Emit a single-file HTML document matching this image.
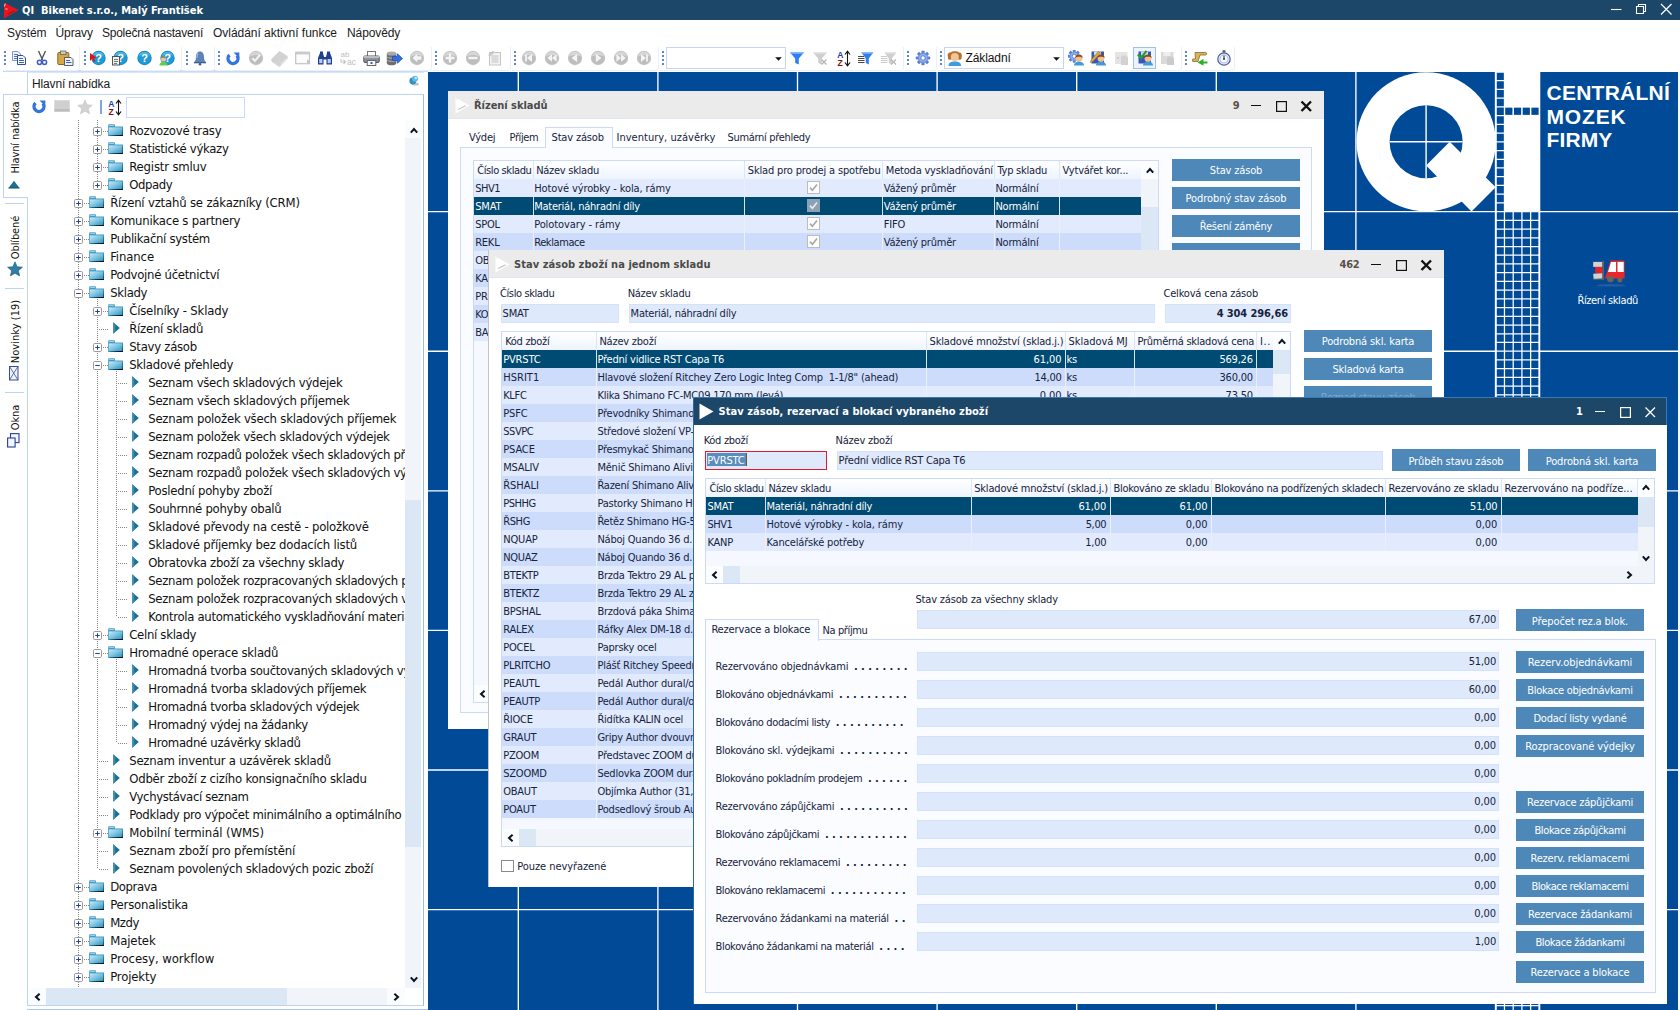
<!DOCTYPE html>
<html lang="cs"><head><meta charset="utf-8"><title>QI Bikenet s.r.o., Malý František</title>
<style>
html,body{margin:0;padding:0;background:#fff;}
body{width:1680px;height:1010px;overflow:hidden;font-family:"DejaVu Sans Condensed","Liberation Sans",sans-serif;font-stretch:condensed;font-size:11px;color:#16233b;}
div,span.t,svg{position:absolute;box-sizing:border-box;}
.root{position:relative;}
.t{white-space:pre;line-height:13px;font-size:11px;letter-spacing:-0.22px;}
.s{font-family:"Liberation Sans","DejaVu Sans",sans-serif;font-stretch:normal;letter-spacing:-0.1px;}
.tree{letter-spacing:-0.3px;color:#111;}
.menu{color:#1a1a1a;}
.w{color:#fff;}
.vt{color:#111;transform-origin:50% 50%;}
</style></head>
<body>
<div class="root" style="left:0px;top:0px;width:1680px;height:1010px;overflow:hidden;background:#fff;">
<div style="left:0px;top:0px;width:1680px;height:20px;background:#1c4768;"></div>
<svg style="left:3px;top:2px;" width="16" height="17" viewBox="0 0 16 17"><path d="M1 0.5L15.5 8L1 16.5Z" fill="#e8151d"/><path d="M1.6 4.6V2.6L3 2M2.2 7H4.6" stroke="#ffc4c4" stroke-width=".9" fill="none"/><path d="M4.6 12.2L11.4 8.4" stroke="#a80f18" stroke-width="1.2" fill="none"/></svg>
<span class="t" style="top:4px;left:22px;color:#fff;font-weight:bold;letter-spacing:-0.003px;">QI  Bikenet s.r.o., Malý František</span>
<svg style="left:1608px;top:0px;" width="70" height="20" viewBox="0 0 70 20"><path d="M3 9.5H13.5" stroke="#fff" stroke-width="1.1"/><path d="M28.5 6.5H35.5V13.5H28.5Z M30.5 6.5V4.5H37.5V11.5H35.5" stroke="#fff" stroke-width="1.1" fill="none"/><path d="M53 4L63.5 14.5M63.5 4L53 14.5" stroke="#fff" stroke-width="1.2"/></svg>
<div style="left:0px;top:20px;width:1680px;height:26px;background:#fff;"></div>
<span class="t s menu" style="top:26px;font-size:12px;line-height:14px;left:7px;">Systém</span>
<span class="t s menu" style="top:26px;font-size:12px;line-height:14px;left:55.5px;">Úpravy</span>
<span class="t s menu" style="top:26px;font-size:12px;line-height:14px;left:102px;letter-spacing:-0.246px;">Společná nastavení</span>
<span class="t s menu" style="top:26px;font-size:12px;line-height:14px;left:213px;letter-spacing:-0.032px;">Ovládání aktivní funkce</span>
<span class="t s menu" style="top:26px;font-size:12px;line-height:14px;left:347px;">Nápovědy</span>
<div style="left:0px;top:46px;width:1680px;height:26px;background:#fff;"></div>
<div style="left:3px;top:70px;width:425px;height:1.5px;background:#c9dcf5;"></div>
<div style="left:3px;top:46.5px;width:77px;height:24px;border:1px solid #e9f0fb;border-top:none;border-left:none;border-radius:0 0 4px 0;"></div>
<div style="left:81px;top:46.5px;width:101px;height:24px;border:1px solid #e9f0fb;border-top:none;border-left:none;border-radius:0 0 4px 0;"></div>
<div style="left:183px;top:46.5px;width:32px;height:24px;border:1px solid #e9f0fb;border-top:none;border-left:none;border-radius:0 0 4px 0;"></div>
<div style="left:216px;top:46.5px;width:216px;height:24px;border:1px solid #e9f0fb;border-top:none;border-left:none;border-radius:0 0 4px 0;"></div>
<div style="left:433px;top:46.5px;width:78px;height:24px;border:1px solid #e9f0fb;border-top:none;border-left:none;border-radius:0 0 4px 0;"></div>
<div style="left:512px;top:46.5px;width:147px;height:24px;border:1px solid #e9f0fb;border-top:none;border-left:none;border-radius:0 0 4px 0;"></div>
<div style="left:660px;top:46.5px;width:244px;height:24px;border:1px solid #e9f0fb;border-top:none;border-left:none;border-radius:0 0 4px 0;"></div>
<div style="left:905px;top:46.5px;width:32px;height:24px;border:1px solid #e9f0fb;border-top:none;border-left:none;border-radius:0 0 4px 0;"></div>
<div style="left:938px;top:46.5px;width:244px;height:24px;border:1px solid #e9f0fb;border-top:none;border-left:none;border-radius:0 0 4px 0;"></div>
<div style="left:1183px;top:46.5px;width:52px;height:24px;border:1px solid #e9f0fb;border-top:none;border-left:none;border-radius:0 0 4px 0;"></div>
<svg style="left:4px;top:51px;" width="2" height="14" viewBox="0 0 2 14"><rect x="0" y="0" width="2" height="2" fill="#5b86c8"/><rect x="0" y="4" width="2" height="2" fill="#5b86c8"/><rect x="0" y="8" width="2" height="2" fill="#5b86c8"/><rect x="0" y="12" width="2" height="2" fill="#5b86c8"/></svg>
<svg style="left:83.5px;top:51px;" width="2" height="14" viewBox="0 0 2 14"><rect x="0" y="0" width="2" height="2" fill="#5b86c8"/><rect x="0" y="4" width="2" height="2" fill="#5b86c8"/><rect x="0" y="8" width="2" height="2" fill="#5b86c8"/><rect x="0" y="12" width="2" height="2" fill="#5b86c8"/></svg>
<svg style="left:185.5px;top:51px;" width="2" height="14" viewBox="0 0 2 14"><rect x="0" y="0" width="2" height="2" fill="#5b86c8"/><rect x="0" y="4" width="2" height="2" fill="#5b86c8"/><rect x="0" y="8" width="2" height="2" fill="#5b86c8"/><rect x="0" y="12" width="2" height="2" fill="#5b86c8"/></svg>
<svg style="left:218px;top:51px;" width="2" height="14" viewBox="0 0 2 14"><rect x="0" y="0" width="2" height="2" fill="#5b86c8"/><rect x="0" y="4" width="2" height="2" fill="#5b86c8"/><rect x="0" y="8" width="2" height="2" fill="#5b86c8"/><rect x="0" y="12" width="2" height="2" fill="#5b86c8"/></svg>
<svg style="left:435px;top:51px;" width="2" height="14" viewBox="0 0 2 14"><rect x="0" y="0" width="2" height="2" fill="#5b86c8"/><rect x="0" y="4" width="2" height="2" fill="#5b86c8"/><rect x="0" y="8" width="2" height="2" fill="#5b86c8"/><rect x="0" y="12" width="2" height="2" fill="#5b86c8"/></svg>
<svg style="left:514px;top:51px;" width="2" height="14" viewBox="0 0 2 14"><rect x="0" y="0" width="2" height="2" fill="#5b86c8"/><rect x="0" y="4" width="2" height="2" fill="#5b86c8"/><rect x="0" y="8" width="2" height="2" fill="#5b86c8"/><rect x="0" y="12" width="2" height="2" fill="#5b86c8"/></svg>
<svg style="left:662px;top:51px;" width="2" height="14" viewBox="0 0 2 14"><rect x="0" y="0" width="2" height="2" fill="#5b86c8"/><rect x="0" y="4" width="2" height="2" fill="#5b86c8"/><rect x="0" y="8" width="2" height="2" fill="#5b86c8"/><rect x="0" y="12" width="2" height="2" fill="#5b86c8"/></svg>
<svg style="left:907px;top:51px;" width="2" height="14" viewBox="0 0 2 14"><rect x="0" y="0" width="2" height="2" fill="#5b86c8"/><rect x="0" y="4" width="2" height="2" fill="#5b86c8"/><rect x="0" y="8" width="2" height="2" fill="#5b86c8"/><rect x="0" y="12" width="2" height="2" fill="#5b86c8"/></svg>
<svg style="left:940px;top:51px;" width="2" height="14" viewBox="0 0 2 14"><rect x="0" y="0" width="2" height="2" fill="#5b86c8"/><rect x="0" y="4" width="2" height="2" fill="#5b86c8"/><rect x="0" y="8" width="2" height="2" fill="#5b86c8"/><rect x="0" y="12" width="2" height="2" fill="#5b86c8"/></svg>
<svg style="left:1185px;top:51px;" width="2" height="14" viewBox="0 0 2 14"><rect x="0" y="0" width="2" height="2" fill="#5b86c8"/><rect x="0" y="4" width="2" height="2" fill="#5b86c8"/><rect x="0" y="8" width="2" height="2" fill="#5b86c8"/><rect x="0" y="12" width="2" height="2" fill="#5b86c8"/></svg>
<svg style="left:10.5px;top:50px;" width="16" height="16" viewBox="0 0 16 16"><path d="M1.5 1.5H7L9.5 4V10.5H1.5Z" fill="#eef3fb" stroke="#7f96c6"/><path d="M3 4.5H7M3 6.5H8M3 8.5H8" stroke="#4a74d0" stroke-width="1"/><path d="M6.5 5.5H12L14.5 8V14.5H6.5Z" fill="#f4f7fd" stroke="#2f4f9a"/><path d="M8 8.5H12M8 10.5H13M8 12.5H13" stroke="#3a66cc" stroke-width="1"/></svg>
<svg style="left:33.5px;top:50px;" width="16" height="16" viewBox="0 0 16 16"><path d="M4.5 1L8.6 10M11.5 1L7.4 10" stroke="#555" stroke-width="1.4" fill="none"/><circle cx="5.5" cy="12.3" r="2.1" fill="none" stroke="#3b5fc4" stroke-width="1.5"/><circle cx="10.5" cy="12.3" r="2.1" fill="none" stroke="#3b5fc4" stroke-width="1.5"/></svg>
<svg style="left:56.5px;top:50px;" width="17" height="16" viewBox="0 0 17 16"><rect x="0.8" y="2.5" width="11" height="12" rx="1" fill="#d9a646" stroke="#8a6418"/><rect x="3.5" y="1" width="5.5" height="3.5" fill="#c9c9c9" stroke="#666" stroke-width=".8"/><path d="M7.5 7.5H14L16 9.5V15.5H7.5Z" fill="#eef2fb" stroke="#5a5a6a"/><path d="M9 10.5H13M9 12.5H14.5" stroke="#3a66cc"/></svg>
<svg style="left:89.5px;top:50px;" width="17" height="16" viewBox="0 0 17 16"><circle cx="8.5" cy="8" r="7.2" fill="#1486c4"/><circle cx="8.5" cy="8" r="6.4" fill="#1f9ad6"/><path d="M2.6 6A6.4 6.4 0 0 1 14.4 6A10 7 0 0 0 2.6 6Z" fill="#4cb6e6"/><text x="8.5" y="12" font-family="Liberation Sans,sans-serif" font-weight="bold" font-size="11" fill="#fff" text-anchor="middle">?</text><path d="M0 3L0 11L2.3 8.8L4 12L5.5 11.2L3.9 8.2L7 8Z" fill="#e01515"/></svg>
<svg style="left:112px;top:50px;" width="17" height="16" viewBox="0 0 17 16"><circle cx="8.5" cy="8" r="7.2" fill="#1486c4"/><circle cx="8.5" cy="8" r="6.4" fill="#1f9ad6"/><path d="M2.6 6A6.4 6.4 0 0 1 14.4 6A10 7 0 0 0 2.6 6Z" fill="#4cb6e6"/><text x="8.5" y="12" font-family="Liberation Sans,sans-serif" font-weight="bold" font-size="11" fill="#fff" text-anchor="middle">?</text><rect x="0.5" y="6.5" width="7" height="8.5" fill="#f2f2f2" stroke="#555"/><path d="M2 9.5H6M2 11.5H6M2 13.5H5" stroke="#666" stroke-width=".9"/></svg>
<svg style="left:135.5px;top:50px;" width="17" height="16" viewBox="0 0 17 16"><circle cx="8.5" cy="8" r="7.2" fill="#1486c4"/><circle cx="8.5" cy="8" r="6.4" fill="#1f9ad6"/><path d="M2.6 6A6.4 6.4 0 0 1 14.4 6A10 7 0 0 0 2.6 6Z" fill="#4cb6e6"/><text x="8.5" y="12" font-family="Liberation Sans,sans-serif" font-weight="bold" font-size="11" fill="#fff" text-anchor="middle">?</text></svg>
<svg style="left:158.5px;top:50px;" width="17" height="16" viewBox="0 0 17 16"><circle cx="8.5" cy="8" r="7.2" fill="#1486c4"/><circle cx="8.5" cy="8" r="6.4" fill="#1f9ad6"/><path d="M2.6 6A6.4 6.4 0 0 1 14.4 6A10 7 0 0 0 2.6 6Z" fill="#4cb6e6"/><text x="8.5" y="12" font-family="Liberation Sans,sans-serif" font-weight="bold" font-size="11" fill="#fff" text-anchor="middle">?</text><circle cx="4.5" cy="9" r="2.6" fill="#f1c08e"/><path d="M1.8 8.6A2.8 2.8 0 0 1 7.2 8.6C6 7.2 3 7.2 1.8 8.6Z" fill="#8a4b1c"/><path d="M0.5 15.5C0.5 12.5 2.5 12 4.5 12S8.5 12.5 8.5 15.5Z" fill="#5fd04a"/></svg>
<svg style="left:192px;top:50px;" width="16" height="16" viewBox="0 0 16 16"><path d="M8 1.5C5 1.5 4 4 4 7C4 10 3 11 2.3 12H13.7C13 11 12 10 12 7C12 4 11 1.5 8 1.5Z" fill="#5d84b6"/><path d="M6 3C5.2 4 5 5.5 5 8" stroke="#9fbbe0" stroke-width="1.2" fill="none"/><rect x="2" y="12" width="12" height="1.3" fill="#3d5f92"/><circle cx="8" cy="14.2" r="1.3" fill="#3d5f92"/></svg>
<svg style="left:226px;top:51.5px;" width="14" height="14" viewBox="0 0 14 14"><path d="M3.5 3.05A4.95 4.95 0 1 0 10.9 3.5" fill="none" stroke="#3473e0" stroke-width="3.4"/><path d="M7.6 0.4H13.4L13.2 6.2Z" fill="#3473e0"/></svg>
<svg style="left:248px;top:50px;" width="16" height="16" viewBox="0 0 16 16"><defs></defs><circle cx="8" cy="8" r="7.2" fill="#c6c6c6"/><circle cx="8" cy="8" r="6.2" fill="#bdbdbd"/><path d="M2 6.5A6.2 6.2 0 0 1 14 6.5A9 6 0 0 0 2 6.5Z" fill="#d6d6d6"/><path d="M4.3 8.2L7 10.8L11.8 5" stroke="#f4f4f4" stroke-width="2" fill="none"/></svg>
<svg style="left:270.5px;top:49.5px;" width="17" height="17" viewBox="0 0 17 17"><path d="M0.5 9L8.5 1L16.5 6L8.5 14.5Z" fill="#d2d2d2"/><path d="M0.5 9L8.5 14.5V17L0.5 11.2Z" fill="#bcbcbc"/><path d="M8.5 14.5L16.5 6V8.3L8.5 17Z" fill="#c6c6c6"/><path d="M1.5 10.8L8.5 15.8L15.8 7.8" stroke="#eee" stroke-width=".8" fill="none"/></svg>
<svg style="left:294.5px;top:50px;" width="16" height="16" viewBox="0 0 16 16"><rect x="0.7" y="2.2" width="13.8" height="11.5" fill="#fbfbfb" stroke="#c4c4c4" stroke-width="1.2"/><rect x="0.7" y="2.2" width="13.8" height="2.2" fill="#c9c9c9"/><path d="M12 9.5L15.5 11.5L12 14Z" fill="#c4c4c4"/></svg>
<svg style="left:316.5px;top:50px;" width="16" height="16" viewBox="0 0 16 16"><path d="M1 14.5V8L3 3H6L7 7H9L10 3H13L15 8V14.5H9.5V9.5H6.5V14.5Z" fill="#1f3f8f"/><rect x="2.2" y="9" width="3.2" height="4.2" fill="#b9cdf0"/><rect x="10.6" y="9" width="3.2" height="4.2" fill="#b9cdf0"/><rect x="3" y="1.5" width="3" height="2" fill="#1f3f8f"/><rect x="10" y="1.5" width="3" height="2" fill="#1f3f8f"/></svg>
<svg style="left:339.5px;top:50px;" width="17" height="16" viewBox="0 0 17 16"><text x="0.5" y="6.5" font-family="Liberation Sans,sans-serif" font-size="8" fill="#bdbdbd">ab</text><text x="7" y="15" font-family="Liberation Sans,sans-serif" font-size="8.5" fill="#bdbdbd">ac</text><path d="M1 9V12H5M3.5 10L5.5 12L3.5 14" stroke="#c4c4c4" stroke-width="1.1" fill="none"/></svg>
<svg style="left:362.5px;top:50px;" width="17" height="16" viewBox="0 0 17 16"><rect x="4.5" y="1.5" width="8" height="5" fill="#fff" stroke="#777"/><rect x="0.8" y="6" width="15.4" height="6.5" rx="1" fill="#8a8f98" stroke="#555"/><rect x="0.8" y="6" width="15.4" height="2.2" fill="#b7bcc6"/><rect x="4.2" y="10.5" width="8.6" height="5" fill="#f6f8fd" stroke="#666"/><rect x="7.5" y="12" width="2" height="2" fill="#2f67d8"/></svg>
<svg style="left:385.5px;top:50px;" width="17" height="16" viewBox="0 0 17 16"><path d="M0.8 3.5V13C0.8 14.5 3 15.3 5.6 15.3S10.4 14.5 10.4 13V3.5Z" fill="#6e6e6e"/><ellipse cx="5.6" cy="3.5" rx="4.8" ry="2" fill="#a9a9a9"/><path d="M0.8 6.8C2 8.6 9 8.6 10.4 6.8M0.8 10C2 11.8 9 11.8 10.4 10" stroke="#bbb" stroke-width=".9" fill="none"/><path d="M6.5 6.5H11.5V3.8L16.5 8.5L11.5 13.2V10.5H6.5Z" fill="#2f6fe0" stroke="#1a4bb0" stroke-width=".7"/></svg>
<svg style="left:409px;top:50px;" width="16" height="16" viewBox="0 0 16 16"><defs></defs><circle cx="8" cy="8" r="7.2" fill="#c6c6c6"/><circle cx="8" cy="8" r="6.2" fill="#bdbdbd"/><path d="M2 6.5A6.2 6.2 0 0 1 14 6.5A9 6 0 0 0 2 6.5Z" fill="#d6d6d6"/><path d="M3.5 8L8.2 3.8V6.3H12.3V9.7H8.2V12.2Z" fill="#f4f4f4"/></svg>
<svg style="left:442px;top:50px;" width="16" height="16" viewBox="0 0 16 16"><defs></defs><circle cx="8" cy="8" r="7.2" fill="#c6c6c6"/><circle cx="8" cy="8" r="6.2" fill="#bdbdbd"/><path d="M2 6.5A6.2 6.2 0 0 1 14 6.5A9 6 0 0 0 2 6.5Z" fill="#d6d6d6"/><path d="M8 3.5V12.5M3.5 8H12.5" stroke="#f4f4f4" stroke-width="2.4"/></svg>
<svg style="left:465px;top:50px;" width="16" height="16" viewBox="0 0 16 16"><defs></defs><circle cx="8" cy="8" r="7.2" fill="#c6c6c6"/><circle cx="8" cy="8" r="6.2" fill="#bdbdbd"/><path d="M2 6.5A6.2 6.2 0 0 1 14 6.5A9 6 0 0 0 2 6.5Z" fill="#d6d6d6"/><path d="M3.5 8H12.5" stroke="#f4f4f4" stroke-width="2.4"/></svg>
<svg style="left:487px;top:50px;" width="16" height="16" viewBox="0 0 16 16"><rect x="2.5" y="2.5" width="11" height="12.5" fill="#f3f3f3" stroke="#c4c4c4"/><path d="M4.5 6H11.5M4.5 8H11.5M4.5 10H11.5M4.5 12H11.5" stroke="#bdbdbd" stroke-width=".9"/><path d="M1 5L6 0.8L8.2 2.2L3 6.5Z" fill="#c9c9c9"/></svg>
<svg style="left:521px;top:50px;" width="16" height="16" viewBox="0 0 16 16"><defs></defs><circle cx="8" cy="8" r="7.2" fill="#c6c6c6"/><circle cx="8" cy="8" r="6.2" fill="#bdbdbd"/><path d="M2 6.5A6.2 6.2 0 0 1 14 6.5A9 6 0 0 0 2 6.5Z" fill="#d6d6d6"/><path d="M5 4.5V11.5" stroke="#f4f4f4" stroke-width="1.8"/><path d="M6 8L11 4V12Z" fill="#f4f4f4"/></svg>
<svg style="left:544px;top:50px;" width="16" height="16" viewBox="0 0 16 16"><defs></defs><circle cx="8" cy="8" r="7.2" fill="#c6c6c6"/><circle cx="8" cy="8" r="6.2" fill="#bdbdbd"/><path d="M2 6.5A6.2 6.2 0 0 1 14 6.5A9 6 0 0 0 2 6.5Z" fill="#d6d6d6"/><path d="M3.2 8L8 4.2V11.8ZM8 8L12.6 4.2V11.8Z" fill="#f4f4f4"/></svg>
<svg style="left:567px;top:50px;" width="16" height="16" viewBox="0 0 16 16"><defs></defs><circle cx="8" cy="8" r="7.2" fill="#c6c6c6"/><circle cx="8" cy="8" r="6.2" fill="#bdbdbd"/><path d="M2 6.5A6.2 6.2 0 0 1 14 6.5A9 6 0 0 0 2 6.5Z" fill="#d6d6d6"/><path d="M4.5 8L10.2 3.8V12.2Z" fill="#f4f4f4"/></svg>
<svg style="left:590px;top:50px;" width="16" height="16" viewBox="0 0 16 16"><defs></defs><circle cx="8" cy="8" r="7.2" fill="#c6c6c6"/><circle cx="8" cy="8" r="6.2" fill="#bdbdbd"/><path d="M2 6.5A6.2 6.2 0 0 1 14 6.5A9 6 0 0 0 2 6.5Z" fill="#d6d6d6"/><path d="M11.5 8L5.8 3.8V12.2Z" fill="#f4f4f4"/></svg>
<svg style="left:613px;top:50px;" width="16" height="16" viewBox="0 0 16 16"><defs></defs><circle cx="8" cy="8" r="7.2" fill="#c6c6c6"/><circle cx="8" cy="8" r="6.2" fill="#bdbdbd"/><path d="M2 6.5A6.2 6.2 0 0 1 14 6.5A9 6 0 0 0 2 6.5Z" fill="#d6d6d6"/><path d="M12.8 8L8 4.2V11.8ZM8 8L3.4 4.2V11.8Z" fill="#f4f4f4"/></svg>
<svg style="left:636px;top:50px;" width="16" height="16" viewBox="0 0 16 16"><defs></defs><circle cx="8" cy="8" r="7.2" fill="#c6c6c6"/><circle cx="8" cy="8" r="6.2" fill="#bdbdbd"/><path d="M2 6.5A6.2 6.2 0 0 1 14 6.5A9 6 0 0 0 2 6.5Z" fill="#d6d6d6"/><path d="M11 4.5V11.5" stroke="#f4f4f4" stroke-width="1.8"/><path d="M10 8L5 4V12Z" fill="#f4f4f4"/></svg>
<div style="left:666px;top:47px;width:120px;height:21.5px;background:#fff;border:1px solid #c3d7f1;"></div>
<svg style="left:775px;top:56.5px;" width="7" height="4" viewBox="0 0 7 4"><path d="M0.2 0.3H6.8L3.5 3.8Z" fill="#111"/></svg>
<svg style="left:789px;top:50px;" width="16" height="16" viewBox="0 0 16 16"><path d="M1 2.5H15L9.8 8.5V14.5L6.2 13V8.5Z" fill="#2f7ff0"/><path d="M1 2.5H15L14 3.8H2Z" fill="#7db4ff"/></svg>
<svg style="left:812px;top:50px;" width="16" height="16" viewBox="0 0 16 16"><path d="M1 2.5H15L9.8 8.5V14.5L6.2 13V8.5Z" fill="#cfcfcf"/><path d="M1 2.5H15L14 3.8H2Z" fill="#e2e2e2"/><path d="M9.5 9.5L14.5 14.5M14.5 9.5L9.5 14.5" stroke="#b4b4b4" stroke-width="1.3"/></svg>
<svg style="left:837px;top:50px;" width="14" height="17" viewBox="0 0 14 17"><text x="0.3" y="7.6" font-family="Liberation Sans,sans-serif" font-weight="bold" font-size="8.5" fill="#1f3f9f">A</text><text x="0.6" y="16" font-family="Liberation Sans,sans-serif" font-weight="bold" font-size="8.5" fill="#7a1414">Z</text><path d="M10.5 2V15" stroke="#111" stroke-width="1.1"/><path d="M8 4.5L10.5 1.2L13 4.5M8 12.5L10.5 15.8L13 12.5" fill="none" stroke="#111" stroke-width="1.2"/></svg>
<svg style="left:858px;top:50px;" width="16" height="16" viewBox="0 0 16 16"><g transform="translate(2.5 0) scale(.85 1)"><path d="M1 2.5H15L9.8 8.5V14.5L6.2 13V8.5Z" fill="#2f7ff0"/><path d="M1 2.5H15L14 3.8H2Z" fill="#7db4ff"/></g><path d="M0 6.5H6M0 8.5H6.5M0 10.5H6.5M0 12.5H6.5" stroke="#333" stroke-width=".9"/></svg>
<svg style="left:881px;top:50px;" width="16" height="16" viewBox="0 0 16 16"><g transform="translate(2.5 0) scale(.85 1)"><path d="M1 2.5H15L9.8 8.5V14.5L6.2 13V8.5Z" fill="#cfcfcf"/><path d="M1 2.5H15L14 3.8H2Z" fill="#e2e2e2"/></g><path d="M0 6.5H6M0 8.5H6.5M0 10.5H6.5M0 12.5H6.5" stroke="#c4c4c4" stroke-width=".9"/><path d="M10 9.5L15 14.5M15 9.5L10 14.5" stroke="#b4b4b4" stroke-width="1.3"/></svg>
<svg style="left:914.5px;top:50px;" width="16" height="16" viewBox="0 0 16 16"><g transform="translate(8 8)"><g fill="#5b7fd0"><rect x="-1.6" y="-7.2" width="3.2" height="14.4" rx=".8" transform="rotate(0)"/><rect x="-1.6" y="-7.2" width="3.2" height="14.4" rx=".8" transform="rotate(45)"/><rect x="-1.6" y="-7.2" width="3.2" height="14.4" rx=".8" transform="rotate(90)"/><rect x="-1.6" y="-7.2" width="3.2" height="14.4" rx=".8" transform="rotate(135)"/></g><circle r="5" fill="#6f92de"/><circle r="4" fill="#8fb0ee"/><circle r="2.2" fill="#fff" stroke="#4a6dc0" stroke-width=".8"/></g></svg>
<div style="left:944px;top:47px;width:120px;height:21.5px;background:#fff;border:1px solid #c3d7f1;"></div>
<svg style="left:947px;top:50.5px;" width="16" height="15" viewBox="0 0 16 15"><path d="M1 6C0 4 1 1 3.5 1.5C5 -0.2 10.5 -0.2 12 1.5C14.5 1 15.5 4 14.5 6.5C15 8 13.5 9.5 12 8.5H3.5C2 9.5 0.5 8 1 6Z" fill="#b5702f"/><circle cx="7.8" cy="6" r="4" fill="#f4c493"/><path d="M1.5 15C1.5 11.5 4 10.5 7.8 10.5S14 11.5 14 15Z" fill="#3f9bdc"/></svg>
<span class="t s menu" style="top:51px;font-size:12px;line-height:14px;left:965.5px;color:#111;">Základní</span>
<svg style="left:1052.5px;top:56.5px;" width="7" height="4" viewBox="0 0 7 4"><path d="M0.2 0.3H6.8L3.5 3.8Z" fill="#111"/></svg>
<svg style="left:1068px;top:50px;" width="16" height="16" viewBox="0 0 16 16"><g transform="translate(-1 -1) scale(.9)"><g transform="translate(8 8)"><g fill="#5b7fd0"><rect x="-1.6" y="-7.2" width="3.2" height="14.4" rx=".8" transform="rotate(0)"/><rect x="-1.6" y="-7.2" width="3.2" height="14.4" rx=".8" transform="rotate(45)"/><rect x="-1.6" y="-7.2" width="3.2" height="14.4" rx=".8" transform="rotate(90)"/><rect x="-1.6" y="-7.2" width="3.2" height="14.4" rx=".8" transform="rotate(135)"/></g><circle r="5" fill="#6f92de"/><circle r="4" fill="#8fb0ee"/><circle r="2.2" fill="#fff" stroke="#4a6dc0" stroke-width=".8"/></g></g><g transform="translate(6 4.5) scale(1)"><circle cx="5" cy="4" r="3.4" fill="#f1c08e"/><path d="M1.4 3.6A3.6 3.6 0 0 1 8.6 3.6C7 1.8 3 1.8 1.4 3.6Z" fill="#8a4b1c"/><path d="M0 11C0 8 2.5 7.2 5 7.2S10 8 10 11Z" fill="#3f9bdc"/></g></svg>
<svg style="left:1090px;top:50px;" width="16" height="16" viewBox="0 0 16 16"><rect x="1.5" y="1.5" width="12.5" height="12" fill="#3a56b8"/><rect x="4" y="1.5" width="7" height="4" fill="#cfd8f4"/><g transform="translate(6 4.5) scale(1)"><circle cx="5" cy="4" r="3.4" fill="#f1c08e"/><path d="M1.4 3.6A3.6 3.6 0 0 1 8.6 3.6C7 1.8 3 1.8 1.4 3.6Z" fill="#8a4b1c"/><path d="M0 11C0 8 2.5 7.2 5 7.2S10 8 10 11Z" fill="#3f9bdc"/></g><path d="M1 10L8.5 1.5L10.5 3L3 11.5L0.5 12.5Z" fill="#e2a93a" stroke="#8a6418" stroke-width=".5"/></svg>
<svg style="left:1113.5px;top:50px;" width="16" height="16" viewBox="0 0 16 16"><rect x="1" y="2" width="12.5" height="12" fill="#e4e4e4"/><path d="M7 8C7 6 9 5 10.5 5.5C12.5 5 14.5 7 14 9.5V15H7Z" fill="#d2d2d2"/><rect x="3" y="7" width="2" height="1.5" fill="#c4c4c4"/></svg>
<div style="left:1133px;top:47px;width:23px;height:21.5px;background:#eef4fd;border:1px solid #9fc0ea;"></div>
<svg style="left:1136.5px;top:50px;" width="16" height="16" viewBox="0 0 16 16"><rect x="1.5" y="1.5" width="12.5" height="12" fill="#3a56b8"/><rect x="4" y="1.5" width="7" height="4" fill="#cfd8f4"/><g transform="translate(6 4.5) scale(1)"><circle cx="5" cy="4" r="3.4" fill="#f1c08e"/><path d="M1.4 3.6A3.6 3.6 0 0 1 8.6 3.6C7 1.8 3 1.8 1.4 3.6Z" fill="#8a4b1c"/><path d="M0 11C0 8 2.5 7.2 5 7.2S10 8 10 11Z" fill="#3f9bdc"/></g><path d="M0.8 4.5L4 8L9.5 0.8" stroke="#27a127" stroke-width="2.2" fill="none"/></svg>
<svg style="left:1159.5px;top:50px;" width="16" height="16" viewBox="0 0 16 16"><rect x="1" y="2" width="12.5" height="12" fill="#dadada"/><rect x="3.5" y="2" width="7" height="4" fill="#eee"/><path d="M7 9C7 7 9 6 10.5 6.5C12.5 6 14.5 8 14 10.5V15H7Z" fill="#cbcbcb"/></svg>
<svg style="left:1192px;top:50px;" width="17" height="16" viewBox="0 0 17 16"><path d="M3 2.5H13.5C15 2.5 15 5 13.5 5H8L6 11.5H1C-0.3 11.5 -0.3 9 1 9H3.5Z" fill="#d7b35a" stroke="#8a6a1e" stroke-width=".8"/><path d="M5.5 12H9.5V9.2L15.5 13L9.5 16.3V14H5.5Z" fill="#2fae2f" transform="scale(-1 1) translate(-21 -0.5)"/></svg>
<svg style="left:1215.5px;top:50px;" width="16" height="16" viewBox="0 0 16 16"><rect x="6.6" y="0.3" width="2.8" height="2.2" fill="#555"/><circle cx="8" cy="9" r="6.2" fill="#dfe6f6" stroke="#4a5f9a" stroke-width="1.2"/><circle cx="8" cy="9" r="4" fill="#f8faff" stroke="#8fa3d6" stroke-width=".6"/><path d="M8 9V5.5" stroke="#223" stroke-width="1"/><circle cx="8" cy="9" r="1" fill="#334"/></svg>
<div style="left:0px;top:71.5px;width:428px;height:938.5px;overflow:hidden;background:#fff;">
<div style="left:27px;top:0px;width:397px;height:23px;border-left:1px solid #bcd3f2;border-top:1px solid #dbe7f8;"></div>
<span class="t s menu" style="top:5.5px;font-size:12px;line-height:14px;left:32px;letter-spacing:-0.147px;">Hlavní nabídka</span>
<svg style="left:408px;top:3.5px;" width="12" height="12" viewBox="0 0 12 12"><ellipse cx="7.5" cy="9" rx="3.5" ry="1.6" fill="#999" opacity=".6"/><circle cx="4.8" cy="6" r="3.4" fill="#2f8fc0"/><circle cx="7" cy="3.8" r="3" fill="#5fb8e4"/><circle cx="7.8" cy="3" r="1.2" fill="#c8ecff"/></svg>
<div style="left:3px;top:22.5px;width:420.5px;height:912px;border:1px solid #bcd3f2;border-right-color:#9bbce6;"></div>
<div style="left:2px;top:126px;width:25px;height:810px;background:#fff;"></div>
<div style="left:3px;top:125.5px;width:24.5px;height:1px;background:#bcd3f2;"></div>
<div style="left:27px;top:125.5px;width:1px;height:808.5px;background:#bcd3f2;"></div>
<div style="left:3px;top:933.5px;width:24px;height:1px;background:#fff;"></div>
<div style="left:5px;top:131.5px;width:18.5px;height:1px;background:#bcd3f2;"></div>
<div style="left:5px;top:216.5px;width:18.5px;height:1px;background:#bcd3f2;"></div>
<div style="left:5px;top:320.5px;width:18.5px;height:1px;background:#bcd3f2;"></div>
<span class="t vt" style="left:-85px;top:59.5px;width:200px;text-align:center;transform:rotate(-90deg);letter-spacing:-0.11px;">Hlavní nabídka</span>
<span class="t vt" style="left:-85px;top:159px;width:200px;text-align:center;transform:rotate(-90deg);letter-spacing:-0.127px;">Oblíbené</span>
<span class="t vt" style="left:-85px;top:253.5px;width:200px;text-align:center;transform:rotate(-90deg);letter-spacing:0.035px;">Novinky (19)</span>
<span class="t vt" style="left:-85px;top:339px;width:200px;text-align:center;transform:rotate(-90deg);letter-spacing:-0.04px;">Okna</span>
<svg style="left:8px;top:108.5px;" width="12" height="9" viewBox="0 0 12 9"><path d="M0.5 8L6 0.8L11.5 8Z" fill="#1f6f92"/><path d="M0.5 8H11.5" stroke="#164d66" stroke-width="1"/></svg>
<svg style="left:7px;top:189.5px;" width="16" height="16" viewBox="0 0 16 16"><path d="M8 0.8L10.1 5.7L15.4 6.2L11.4 9.7L12.6 14.9L8 12.2L3.4 14.9L4.6 9.7L0.6 6.2L5.9 5.7Z" fill="#2d7fa6" stroke="#1a5572" stroke-width=".6"/></svg>
<svg style="left:9px;top:294.5px;" width="10" height="15" viewBox="0 0 10 15"><rect x="0.5" y="0.5" width="8.5" height="13.5" fill="#eef2fb" stroke="#3a4f9a"/><path d="M0.5 0.5L4.7 7.2L0.5 14M9 0.5L4.7 7.2L9 14" fill="none" stroke="#3a4f9a" stroke-width=".8"/></svg>
<svg style="left:7px;top:361.5px;" width="13" height="15" viewBox="0 0 13 15"><rect x="3.5" y="0.6" width="8.5" height="9" fill="#f4f6fd" stroke="#2a3f9a" stroke-width="1.1"/><rect x="0.6" y="5" width="7.5" height="9" fill="#f4f6fd" stroke="#2a3f9a" stroke-width="1.1"/></svg>
<svg style="left:32px;top:28.5px;" width="14" height="14" viewBox="0 0 14 14"><path d="M3.5 3.05A4.95 4.95 0 1 0 10.9 3.5" fill="none" stroke="#3473e0" stroke-width="3.4"/><path d="M7.6 0.4H13.4L13.2 6.2Z" fill="#3473e0"/></svg>
<svg style="left:54px;top:28.5px;" width="16" height="13" viewBox="0 0 16 13"><rect x="0.5" y="0.5" width="15" height="11" fill="#cfcfcf" stroke="#dcdcdc"/><rect x="0.5" y="9" width="15" height="2.5" fill="#bdbdbd"/></svg>
<svg style="left:77px;top:27.5px;" width="16" height="16" viewBox="0 0 16 16"><path d="M8 0.8L10.1 5.7L15.4 6.2L11.4 9.7L12.6 14.9L8 12.2L3.4 14.9L4.6 9.7L0.6 6.2L5.9 5.7Z" fill="#d2d2d2" stroke="#c2c2c2" stroke-width=".5"/></svg>
<div style="left:100px;top:28.5px;width:1.5px;height:14px;background:#7fa6d6;"></div>
<svg style="left:108px;top:27.5px;" width="14" height="17" viewBox="0 0 14 17"><text x="0.3" y="7.6" font-family="Liberation Sans,sans-serif" font-weight="bold" font-size="8.5" fill="#1f3f9f">A</text><text x="0.6" y="16" font-family="Liberation Sans,sans-serif" font-weight="bold" font-size="8.5" fill="#7a1414">Z</text><path d="M10.5 2V15" stroke="#111" stroke-width="1.1"/><path d="M8 4.5L10.5 1.2L13 4.5M8 12.5L10.5 15.8L13 12.5" fill="none" stroke="#111" stroke-width="1.2"/></svg>
<div style="left:126px;top:25.5px;width:119px;height:21px;background:#fff;border:1px solid #c9dcf5;"></div>
<div style="left:28px;top:48.5px;width:377px;height:868px;overflow:hidden;background:#fff;">
<svg width="0" height="0" style="left:0;top:0"><defs><linearGradient id="fg" x1="0" y1="0" x2="1" y2="1"><stop offset="0" stop-color="#cfe9f5"/><stop offset=".5" stop-color="#7cc3e0"/><stop offset="1" stop-color="#2f93c2"/></linearGradient><linearGradient id="fb" x1="0" y1="0" x2="1" y2="0"><stop offset="0" stop-color="#2f8db8"/><stop offset=".45" stop-color="#0c3f57"/><stop offset="1" stop-color="#000"/></linearGradient><linearGradient id="fr" x1="0" y1="0" x2="0" y2="1"><stop offset="0" stop-color="#3d9ac3"/><stop offset="1" stop-color="#04202d"/></linearGradient></defs></svg>
<div style="left:50px;top:0px;width:1px;height:870px;background-image:linear-gradient(#888 50%,transparent 50%);background-size:1px 2px;"></div>
<div style="left:69px;top:0px;width:1px;height:65.4px;background-image:linear-gradient(#888 50%,transparent 50%);background-size:1px 2px;"></div>
<div style="left:69px;top:179.4px;width:1px;height:570px;background-image:linear-gradient(#888 50%,transparent 50%);background-size:1px 2px;"></div>
<div style="left:88px;top:251.4px;width:1px;height:246px;background-image:linear-gradient(#888 50%,transparent 50%);background-size:1px 2px;"></div>
<div style="left:88px;top:539.4px;width:1px;height:84px;background-image:linear-gradient(#888 50%,transparent 50%);background-size:1px 2px;"></div>
<div style="left:74.5px;top:10.9px;width:6px;height:1px;background-image:linear-gradient(90deg,#888 50%,transparent 50%);background-size:2px 1px;"></div>
<svg style="left:65px;top:7.1px;" width="9" height="9" viewBox="0 0 9 9"><rect x="0.5" y="0.5" width="8" height="8" rx="1.2" fill="#fff" stroke="#9a9a9a"/><path d="M2.2 4.5H6.8" stroke="#2a3f8f" stroke-width="1"/><path d="M4.5 2.2V6.8" stroke="#2a3f8f" stroke-width="1"/></svg>
<svg style="left:79.9px;top:3.9px;" width="15.2" height="12.3" viewBox="0 0 15.2 12.3"><path d="M0.2 3V0.9Q0.2 0.2 0.9 0.2H6.2Q6.9 0.2 6.9 0.9V3Z" fill="#49a2ca"/><rect x="1.2" y="1" width="4.6" height=".8" fill="#b5deef"/><rect x="0.2" y="2.5" width="14.9" height="9.6" rx=".5" fill="#3d9ac3"/><rect x="1" y="3.4" width="13.3" height="7.6" fill="url(#fg)"/><rect x="0.8" y="11" width="14.3" height="1.15" fill="url(#fb)"/><rect x="14.3" y="3" width=".8" height="9" fill="url(#fr)"/></svg>
<span class="t tree" style="top:3px;font-size:13px;line-height:15px;left:101.2px;letter-spacing:-0.227px;">Rozvozové trasy</span>
<div style="left:74.5px;top:28.9px;width:6px;height:1px;background-image:linear-gradient(90deg,#888 50%,transparent 50%);background-size:2px 1px;"></div>
<svg style="left:65px;top:25.1px;" width="9" height="9" viewBox="0 0 9 9"><rect x="0.5" y="0.5" width="8" height="8" rx="1.2" fill="#fff" stroke="#9a9a9a"/><path d="M2.2 4.5H6.8" stroke="#2a3f8f" stroke-width="1"/><path d="M4.5 2.2V6.8" stroke="#2a3f8f" stroke-width="1"/></svg>
<svg style="left:79.9px;top:21.9px;" width="15.2" height="12.3" viewBox="0 0 15.2 12.3"><path d="M0.2 3V0.9Q0.2 0.2 0.9 0.2H6.2Q6.9 0.2 6.9 0.9V3Z" fill="#49a2ca"/><rect x="1.2" y="1" width="4.6" height=".8" fill="#b5deef"/><rect x="0.2" y="2.5" width="14.9" height="9.6" rx=".5" fill="#3d9ac3"/><rect x="1" y="3.4" width="13.3" height="7.6" fill="url(#fg)"/><rect x="0.8" y="11" width="14.3" height="1.15" fill="url(#fb)"/><rect x="14.3" y="3" width=".8" height="9" fill="url(#fr)"/></svg>
<span class="t tree" style="top:21px;font-size:13px;line-height:15px;left:101.2px;letter-spacing:-0.328px;">Statistické výkazy</span>
<div style="left:74.5px;top:46.9px;width:6px;height:1px;background-image:linear-gradient(90deg,#888 50%,transparent 50%);background-size:2px 1px;"></div>
<svg style="left:65px;top:43.1px;" width="9" height="9" viewBox="0 0 9 9"><rect x="0.5" y="0.5" width="8" height="8" rx="1.2" fill="#fff" stroke="#9a9a9a"/><path d="M2.2 4.5H6.8" stroke="#2a3f8f" stroke-width="1"/><path d="M4.5 2.2V6.8" stroke="#2a3f8f" stroke-width="1"/></svg>
<svg style="left:79.9px;top:39.9px;" width="15.2" height="12.3" viewBox="0 0 15.2 12.3"><path d="M0.2 3V0.9Q0.2 0.2 0.9 0.2H6.2Q6.9 0.2 6.9 0.9V3Z" fill="#49a2ca"/><rect x="1.2" y="1" width="4.6" height=".8" fill="#b5deef"/><rect x="0.2" y="2.5" width="14.9" height="9.6" rx=".5" fill="#3d9ac3"/><rect x="1" y="3.4" width="13.3" height="7.6" fill="url(#fg)"/><rect x="0.8" y="11" width="14.3" height="1.15" fill="url(#fb)"/><rect x="14.3" y="3" width=".8" height="9" fill="url(#fr)"/></svg>
<span class="t tree" style="top:39px;font-size:13px;line-height:15px;left:101.2px;letter-spacing:-0.176px;">Registr smluv</span>
<div style="left:74.5px;top:64.9px;width:6px;height:1px;background-image:linear-gradient(90deg,#888 50%,transparent 50%);background-size:2px 1px;"></div>
<svg style="left:65px;top:61.1px;" width="9" height="9" viewBox="0 0 9 9"><rect x="0.5" y="0.5" width="8" height="8" rx="1.2" fill="#fff" stroke="#9a9a9a"/><path d="M2.2 4.5H6.8" stroke="#2a3f8f" stroke-width="1"/><path d="M4.5 2.2V6.8" stroke="#2a3f8f" stroke-width="1"/></svg>
<svg style="left:79.9px;top:57.9px;" width="15.2" height="12.3" viewBox="0 0 15.2 12.3"><path d="M0.2 3V0.9Q0.2 0.2 0.9 0.2H6.2Q6.9 0.2 6.9 0.9V3Z" fill="#49a2ca"/><rect x="1.2" y="1" width="4.6" height=".8" fill="#b5deef"/><rect x="0.2" y="2.5" width="14.9" height="9.6" rx=".5" fill="#3d9ac3"/><rect x="1" y="3.4" width="13.3" height="7.6" fill="url(#fg)"/><rect x="0.8" y="11" width="14.3" height="1.15" fill="url(#fb)"/><rect x="14.3" y="3" width=".8" height="9" fill="url(#fr)"/></svg>
<span class="t tree" style="top:57px;font-size:13px;line-height:15px;left:101.2px;letter-spacing:-0.43px;">Odpady</span>
<div style="left:55.5px;top:82.9px;width:6px;height:1px;background-image:linear-gradient(90deg,#888 50%,transparent 50%);background-size:2px 1px;"></div>
<svg style="left:46px;top:79.1px;" width="9" height="9" viewBox="0 0 9 9"><rect x="0.5" y="0.5" width="8" height="8" rx="1.2" fill="#fff" stroke="#9a9a9a"/><path d="M2.2 4.5H6.8" stroke="#2a3f8f" stroke-width="1"/><path d="M4.5 2.2V6.8" stroke="#2a3f8f" stroke-width="1"/></svg>
<svg style="left:60.9px;top:75.9px;" width="15.2" height="12.3" viewBox="0 0 15.2 12.3"><path d="M0.2 3V0.9Q0.2 0.2 0.9 0.2H6.2Q6.9 0.2 6.9 0.9V3Z" fill="#49a2ca"/><rect x="1.2" y="1" width="4.6" height=".8" fill="#b5deef"/><rect x="0.2" y="2.5" width="14.9" height="9.6" rx=".5" fill="#3d9ac3"/><rect x="1" y="3.4" width="13.3" height="7.6" fill="url(#fg)"/><rect x="0.8" y="11" width="14.3" height="1.15" fill="url(#fb)"/><rect x="14.3" y="3" width=".8" height="9" fill="url(#fr)"/></svg>
<span class="t tree" style="top:75px;font-size:13px;line-height:15px;left:82.2px;letter-spacing:-0.191px;">Řízení vztahů se zákazníky (CRM)</span>
<div style="left:55.5px;top:100.9px;width:6px;height:1px;background-image:linear-gradient(90deg,#888 50%,transparent 50%);background-size:2px 1px;"></div>
<svg style="left:46px;top:97.1px;" width="9" height="9" viewBox="0 0 9 9"><rect x="0.5" y="0.5" width="8" height="8" rx="1.2" fill="#fff" stroke="#9a9a9a"/><path d="M2.2 4.5H6.8" stroke="#2a3f8f" stroke-width="1"/><path d="M4.5 2.2V6.8" stroke="#2a3f8f" stroke-width="1"/></svg>
<svg style="left:60.9px;top:93.9px;" width="15.2" height="12.3" viewBox="0 0 15.2 12.3"><path d="M0.2 3V0.9Q0.2 0.2 0.9 0.2H6.2Q6.9 0.2 6.9 0.9V3Z" fill="#49a2ca"/><rect x="1.2" y="1" width="4.6" height=".8" fill="#b5deef"/><rect x="0.2" y="2.5" width="14.9" height="9.6" rx=".5" fill="#3d9ac3"/><rect x="1" y="3.4" width="13.3" height="7.6" fill="url(#fg)"/><rect x="0.8" y="11" width="14.3" height="1.15" fill="url(#fb)"/><rect x="14.3" y="3" width=".8" height="9" fill="url(#fr)"/></svg>
<span class="t tree" style="top:93px;font-size:13px;line-height:15px;left:82.2px;letter-spacing:-0.23px;">Komunikace s partnery</span>
<div style="left:55.5px;top:118.9px;width:6px;height:1px;background-image:linear-gradient(90deg,#888 50%,transparent 50%);background-size:2px 1px;"></div>
<svg style="left:46px;top:115.1px;" width="9" height="9" viewBox="0 0 9 9"><rect x="0.5" y="0.5" width="8" height="8" rx="1.2" fill="#fff" stroke="#9a9a9a"/><path d="M2.2 4.5H6.8" stroke="#2a3f8f" stroke-width="1"/><path d="M4.5 2.2V6.8" stroke="#2a3f8f" stroke-width="1"/></svg>
<svg style="left:60.9px;top:111.9px;" width="15.2" height="12.3" viewBox="0 0 15.2 12.3"><path d="M0.2 3V0.9Q0.2 0.2 0.9 0.2H6.2Q6.9 0.2 6.9 0.9V3Z" fill="#49a2ca"/><rect x="1.2" y="1" width="4.6" height=".8" fill="#b5deef"/><rect x="0.2" y="2.5" width="14.9" height="9.6" rx=".5" fill="#3d9ac3"/><rect x="1" y="3.4" width="13.3" height="7.6" fill="url(#fg)"/><rect x="0.8" y="11" width="14.3" height="1.15" fill="url(#fb)"/><rect x="14.3" y="3" width=".8" height="9" fill="url(#fr)"/></svg>
<span class="t tree" style="top:111px;font-size:13px;line-height:15px;left:82.2px;letter-spacing:-0.31px;">Publikační systém</span>
<div style="left:55.5px;top:136.9px;width:6px;height:1px;background-image:linear-gradient(90deg,#888 50%,transparent 50%);background-size:2px 1px;"></div>
<svg style="left:46px;top:133.1px;" width="9" height="9" viewBox="0 0 9 9"><rect x="0.5" y="0.5" width="8" height="8" rx="1.2" fill="#fff" stroke="#9a9a9a"/><path d="M2.2 4.5H6.8" stroke="#2a3f8f" stroke-width="1"/><path d="M4.5 2.2V6.8" stroke="#2a3f8f" stroke-width="1"/></svg>
<svg style="left:60.9px;top:129.9px;" width="15.2" height="12.3" viewBox="0 0 15.2 12.3"><path d="M0.2 3V0.9Q0.2 0.2 0.9 0.2H6.2Q6.9 0.2 6.9 0.9V3Z" fill="#49a2ca"/><rect x="1.2" y="1" width="4.6" height=".8" fill="#b5deef"/><rect x="0.2" y="2.5" width="14.9" height="9.6" rx=".5" fill="#3d9ac3"/><rect x="1" y="3.4" width="13.3" height="7.6" fill="url(#fg)"/><rect x="0.8" y="11" width="14.3" height="1.15" fill="url(#fb)"/><rect x="14.3" y="3" width=".8" height="9" fill="url(#fr)"/></svg>
<span class="t tree" style="top:129px;font-size:13px;line-height:15px;left:82.2px;letter-spacing:-0.122px;">Finance</span>
<div style="left:55.5px;top:154.9px;width:6px;height:1px;background-image:linear-gradient(90deg,#888 50%,transparent 50%);background-size:2px 1px;"></div>
<svg style="left:46px;top:151.1px;" width="9" height="9" viewBox="0 0 9 9"><rect x="0.5" y="0.5" width="8" height="8" rx="1.2" fill="#fff" stroke="#9a9a9a"/><path d="M2.2 4.5H6.8" stroke="#2a3f8f" stroke-width="1"/><path d="M4.5 2.2V6.8" stroke="#2a3f8f" stroke-width="1"/></svg>
<svg style="left:60.9px;top:147.9px;" width="15.2" height="12.3" viewBox="0 0 15.2 12.3"><path d="M0.2 3V0.9Q0.2 0.2 0.9 0.2H6.2Q6.9 0.2 6.9 0.9V3Z" fill="#49a2ca"/><rect x="1.2" y="1" width="4.6" height=".8" fill="#b5deef"/><rect x="0.2" y="2.5" width="14.9" height="9.6" rx=".5" fill="#3d9ac3"/><rect x="1" y="3.4" width="13.3" height="7.6" fill="url(#fg)"/><rect x="0.8" y="11" width="14.3" height="1.15" fill="url(#fb)"/><rect x="14.3" y="3" width=".8" height="9" fill="url(#fr)"/></svg>
<span class="t tree" style="top:147px;font-size:13px;line-height:15px;left:82.2px;letter-spacing:-0.274px;">Podvojné účetnictví</span>
<div style="left:55.5px;top:172.9px;width:6px;height:1px;background-image:linear-gradient(90deg,#888 50%,transparent 50%);background-size:2px 1px;"></div>
<svg style="left:46px;top:169.1px;" width="9" height="9" viewBox="0 0 9 9"><rect x="0.5" y="0.5" width="8" height="8" rx="1.2" fill="#fff" stroke="#9a9a9a"/><path d="M2.2 4.5H6.8" stroke="#2a3f8f" stroke-width="1"/></svg>
<svg style="left:60.9px;top:165.9px;" width="15.2" height="12.3" viewBox="0 0 15.2 12.3"><path d="M0.2 3V0.9Q0.2 0.2 0.9 0.2H6.2Q6.9 0.2 6.9 0.9V3Z" fill="#49a2ca"/><rect x="1.2" y="1" width="4.6" height=".8" fill="#b5deef"/><rect x="0.2" y="2.5" width="14.9" height="9.6" rx=".5" fill="#3d9ac3"/><rect x="1" y="3.4" width="13.3" height="7.6" fill="url(#fg)"/><rect x="0.8" y="11" width="14.3" height="1.15" fill="url(#fb)"/><rect x="14.3" y="3" width=".8" height="9" fill="url(#fr)"/></svg>
<span class="t tree" style="top:165px;font-size:13px;line-height:15px;left:82.2px;letter-spacing:-0.328px;">Sklady</span>
<div style="left:74.5px;top:190.9px;width:6px;height:1px;background-image:linear-gradient(90deg,#888 50%,transparent 50%);background-size:2px 1px;"></div>
<svg style="left:65px;top:187.1px;" width="9" height="9" viewBox="0 0 9 9"><rect x="0.5" y="0.5" width="8" height="8" rx="1.2" fill="#fff" stroke="#9a9a9a"/><path d="M2.2 4.5H6.8" stroke="#2a3f8f" stroke-width="1"/><path d="M4.5 2.2V6.8" stroke="#2a3f8f" stroke-width="1"/></svg>
<svg style="left:79.9px;top:183.9px;" width="15.2" height="12.3" viewBox="0 0 15.2 12.3"><path d="M0.2 3V0.9Q0.2 0.2 0.9 0.2H6.2Q6.9 0.2 6.9 0.9V3Z" fill="#49a2ca"/><rect x="1.2" y="1" width="4.6" height=".8" fill="#b5deef"/><rect x="0.2" y="2.5" width="14.9" height="9.6" rx=".5" fill="#3d9ac3"/><rect x="1" y="3.4" width="13.3" height="7.6" fill="url(#fg)"/><rect x="0.8" y="11" width="14.3" height="1.15" fill="url(#fb)"/><rect x="14.3" y="3" width=".8" height="9" fill="url(#fr)"/></svg>
<span class="t tree" style="top:183px;font-size:13px;line-height:15px;left:101.2px;letter-spacing:-0.193px;">Číselníky - Sklady</span>
<div style="left:70.5px;top:208.9px;width:10px;height:1px;background-image:linear-gradient(90deg,#888 50%,transparent 50%);background-size:2px 1px;"></div>
<svg style="left:84.5px;top:202px;" width="7" height="12" viewBox="0 0 7 12"><path d="M0.3 0.3L6.8 6L0.3 11.7Z" fill="#1f6f92"/><path d="M0.3 0.3L2.2 2V10L0.3 11.7Z" fill="#3d8eb0"/></svg>
<span class="t tree" style="top:201px;font-size:13px;line-height:15px;left:101.2px;letter-spacing:-0.248px;">Řízení skladů</span>
<div style="left:74.5px;top:226.9px;width:6px;height:1px;background-image:linear-gradient(90deg,#888 50%,transparent 50%);background-size:2px 1px;"></div>
<svg style="left:65px;top:223.1px;" width="9" height="9" viewBox="0 0 9 9"><rect x="0.5" y="0.5" width="8" height="8" rx="1.2" fill="#fff" stroke="#9a9a9a"/><path d="M2.2 4.5H6.8" stroke="#2a3f8f" stroke-width="1"/><path d="M4.5 2.2V6.8" stroke="#2a3f8f" stroke-width="1"/></svg>
<svg style="left:79.9px;top:219.9px;" width="15.2" height="12.3" viewBox="0 0 15.2 12.3"><path d="M0.2 3V0.9Q0.2 0.2 0.9 0.2H6.2Q6.9 0.2 6.9 0.9V3Z" fill="#49a2ca"/><rect x="1.2" y="1" width="4.6" height=".8" fill="#b5deef"/><rect x="0.2" y="2.5" width="14.9" height="9.6" rx=".5" fill="#3d9ac3"/><rect x="1" y="3.4" width="13.3" height="7.6" fill="url(#fg)"/><rect x="0.8" y="11" width="14.3" height="1.15" fill="url(#fb)"/><rect x="14.3" y="3" width=".8" height="9" fill="url(#fr)"/></svg>
<span class="t tree" style="top:219px;font-size:13px;line-height:15px;left:101.2px;letter-spacing:-0.274px;">Stavy zásob</span>
<div style="left:74.5px;top:244.9px;width:6px;height:1px;background-image:linear-gradient(90deg,#888 50%,transparent 50%);background-size:2px 1px;"></div>
<svg style="left:65px;top:241.1px;" width="9" height="9" viewBox="0 0 9 9"><rect x="0.5" y="0.5" width="8" height="8" rx="1.2" fill="#fff" stroke="#9a9a9a"/><path d="M2.2 4.5H6.8" stroke="#2a3f8f" stroke-width="1"/></svg>
<svg style="left:79.9px;top:237.9px;" width="15.2" height="12.3" viewBox="0 0 15.2 12.3"><path d="M0.2 3V0.9Q0.2 0.2 0.9 0.2H6.2Q6.9 0.2 6.9 0.9V3Z" fill="#49a2ca"/><rect x="1.2" y="1" width="4.6" height=".8" fill="#b5deef"/><rect x="0.2" y="2.5" width="14.9" height="9.6" rx=".5" fill="#3d9ac3"/><rect x="1" y="3.4" width="13.3" height="7.6" fill="url(#fg)"/><rect x="0.8" y="11" width="14.3" height="1.15" fill="url(#fb)"/><rect x="14.3" y="3" width=".8" height="9" fill="url(#fr)"/></svg>
<span class="t tree" style="top:237px;font-size:13px;line-height:15px;left:101.2px;letter-spacing:-0.258px;">Skladové přehledy</span>
<div style="left:89.5px;top:262.9px;width:10px;height:1px;background-image:linear-gradient(90deg,#888 50%,transparent 50%);background-size:2px 1px;"></div>
<svg style="left:103.5px;top:256px;" width="7" height="12" viewBox="0 0 7 12"><path d="M0.3 0.3L6.8 6L0.3 11.7Z" fill="#1f6f92"/><path d="M0.3 0.3L2.2 2V10L0.3 11.7Z" fill="#3d8eb0"/></svg>
<span class="t tree" style="top:255px;font-size:13px;line-height:15px;left:120.2px;letter-spacing:-0.286px;">Seznam všech skladových výdejek</span>
<div style="left:89.5px;top:280.9px;width:10px;height:1px;background-image:linear-gradient(90deg,#888 50%,transparent 50%);background-size:2px 1px;"></div>
<svg style="left:103.5px;top:274px;" width="7" height="12" viewBox="0 0 7 12"><path d="M0.3 0.3L6.8 6L0.3 11.7Z" fill="#1f6f92"/><path d="M0.3 0.3L2.2 2V10L0.3 11.7Z" fill="#3d8eb0"/></svg>
<span class="t tree" style="top:273px;font-size:13px;line-height:15px;left:120.2px;letter-spacing:-0.234px;">Seznam všech skladových příjemek</span>
<div style="left:89.5px;top:298.9px;width:10px;height:1px;background-image:linear-gradient(90deg,#888 50%,transparent 50%);background-size:2px 1px;"></div>
<svg style="left:103.5px;top:292px;" width="7" height="12" viewBox="0 0 7 12"><path d="M0.3 0.3L6.8 6L0.3 11.7Z" fill="#1f6f92"/><path d="M0.3 0.3L2.2 2V10L0.3 11.7Z" fill="#3d8eb0"/></svg>
<span class="t tree" style="top:291px;font-size:13px;line-height:15px;left:120.2px;letter-spacing:-0.235px;">Seznam položek všech skladových příjemek</span>
<div style="left:89.5px;top:316.9px;width:10px;height:1px;background-image:linear-gradient(90deg,#888 50%,transparent 50%);background-size:2px 1px;"></div>
<svg style="left:103.5px;top:310px;" width="7" height="12" viewBox="0 0 7 12"><path d="M0.3 0.3L6.8 6L0.3 11.7Z" fill="#1f6f92"/><path d="M0.3 0.3L2.2 2V10L0.3 11.7Z" fill="#3d8eb0"/></svg>
<span class="t tree" style="top:309px;font-size:13px;line-height:15px;left:120.2px;letter-spacing:-0.271px;">Seznam položek všech skladových výdejek</span>
<div style="left:89.5px;top:334.9px;width:10px;height:1px;background-image:linear-gradient(90deg,#888 50%,transparent 50%);background-size:2px 1px;"></div>
<svg style="left:103.5px;top:328px;" width="7" height="12" viewBox="0 0 7 12"><path d="M0.3 0.3L6.8 6L0.3 11.7Z" fill="#1f6f92"/><path d="M0.3 0.3L2.2 2V10L0.3 11.7Z" fill="#3d8eb0"/></svg>
<span class="t tree" style="top:327px;font-size:13px;line-height:15px;left:120.2px;">Seznam rozpadů položek všech skladových příjemek</span>
<div style="left:89.5px;top:352.9px;width:10px;height:1px;background-image:linear-gradient(90deg,#888 50%,transparent 50%);background-size:2px 1px;"></div>
<svg style="left:103.5px;top:346px;" width="7" height="12" viewBox="0 0 7 12"><path d="M0.3 0.3L6.8 6L0.3 11.7Z" fill="#1f6f92"/><path d="M0.3 0.3L2.2 2V10L0.3 11.7Z" fill="#3d8eb0"/></svg>
<span class="t tree" style="top:345px;font-size:13px;line-height:15px;left:120.2px;">Seznam rozpadů položek všech skladových výdejek</span>
<div style="left:89.5px;top:370.9px;width:10px;height:1px;background-image:linear-gradient(90deg,#888 50%,transparent 50%);background-size:2px 1px;"></div>
<svg style="left:103.5px;top:364px;" width="7" height="12" viewBox="0 0 7 12"><path d="M0.3 0.3L6.8 6L0.3 11.7Z" fill="#1f6f92"/><path d="M0.3 0.3L2.2 2V10L0.3 11.7Z" fill="#3d8eb0"/></svg>
<span class="t tree" style="top:363px;font-size:13px;line-height:15px;left:120.2px;letter-spacing:-0.251px;">Poslední pohyby zboží</span>
<div style="left:89.5px;top:388.9px;width:10px;height:1px;background-image:linear-gradient(90deg,#888 50%,transparent 50%);background-size:2px 1px;"></div>
<svg style="left:103.5px;top:382px;" width="7" height="12" viewBox="0 0 7 12"><path d="M0.3 0.3L6.8 6L0.3 11.7Z" fill="#1f6f92"/><path d="M0.3 0.3L2.2 2V10L0.3 11.7Z" fill="#3d8eb0"/></svg>
<span class="t tree" style="top:381px;font-size:13px;line-height:15px;left:120.2px;letter-spacing:-0.277px;">Souhrnné pohyby obalů</span>
<div style="left:89.5px;top:406.9px;width:10px;height:1px;background-image:linear-gradient(90deg,#888 50%,transparent 50%);background-size:2px 1px;"></div>
<svg style="left:103.5px;top:400px;" width="7" height="12" viewBox="0 0 7 12"><path d="M0.3 0.3L6.8 6L0.3 11.7Z" fill="#1f6f92"/><path d="M0.3 0.3L2.2 2V10L0.3 11.7Z" fill="#3d8eb0"/></svg>
<span class="t tree" style="top:399px;font-size:13px;line-height:15px;left:120.2px;letter-spacing:-0.215px;">Skladové převody na cestě - položkově</span>
<div style="left:89.5px;top:424.9px;width:10px;height:1px;background-image:linear-gradient(90deg,#888 50%,transparent 50%);background-size:2px 1px;"></div>
<svg style="left:103.5px;top:418px;" width="7" height="12" viewBox="0 0 7 12"><path d="M0.3 0.3L6.8 6L0.3 11.7Z" fill="#1f6f92"/><path d="M0.3 0.3L2.2 2V10L0.3 11.7Z" fill="#3d8eb0"/></svg>
<span class="t tree" style="top:417px;font-size:13px;line-height:15px;left:120.2px;letter-spacing:-0.222px;">Skladové příjemky bez dodacích listů</span>
<div style="left:89.5px;top:442.9px;width:10px;height:1px;background-image:linear-gradient(90deg,#888 50%,transparent 50%);background-size:2px 1px;"></div>
<svg style="left:103.5px;top:436px;" width="7" height="12" viewBox="0 0 7 12"><path d="M0.3 0.3L6.8 6L0.3 11.7Z" fill="#1f6f92"/><path d="M0.3 0.3L2.2 2V10L0.3 11.7Z" fill="#3d8eb0"/></svg>
<span class="t tree" style="top:435px;font-size:13px;line-height:15px;left:120.2px;letter-spacing:-0.281px;">Obratovka zboží za všechny sklady</span>
<div style="left:89.5px;top:460.9px;width:10px;height:1px;background-image:linear-gradient(90deg,#888 50%,transparent 50%);background-size:2px 1px;"></div>
<svg style="left:103.5px;top:454px;" width="7" height="12" viewBox="0 0 7 12"><path d="M0.3 0.3L6.8 6L0.3 11.7Z" fill="#1f6f92"/><path d="M0.3 0.3L2.2 2V10L0.3 11.7Z" fill="#3d8eb0"/></svg>
<span class="t tree" style="top:453px;font-size:13px;line-height:15px;left:120.2px;">Seznam položek rozpracovaných skladových příjemek</span>
<div style="left:89.5px;top:478.9px;width:10px;height:1px;background-image:linear-gradient(90deg,#888 50%,transparent 50%);background-size:2px 1px;"></div>
<svg style="left:103.5px;top:472px;" width="7" height="12" viewBox="0 0 7 12"><path d="M0.3 0.3L6.8 6L0.3 11.7Z" fill="#1f6f92"/><path d="M0.3 0.3L2.2 2V10L0.3 11.7Z" fill="#3d8eb0"/></svg>
<span class="t tree" style="top:471px;font-size:13px;line-height:15px;left:120.2px;">Seznam položek rozpracovaných skladových výdejek</span>
<div style="left:89.5px;top:496.9px;width:10px;height:1px;background-image:linear-gradient(90deg,#888 50%,transparent 50%);background-size:2px 1px;"></div>
<svg style="left:103.5px;top:490px;" width="7" height="12" viewBox="0 0 7 12"><path d="M0.3 0.3L6.8 6L0.3 11.7Z" fill="#1f6f92"/><path d="M0.3 0.3L2.2 2V10L0.3 11.7Z" fill="#3d8eb0"/></svg>
<span class="t tree" style="top:489px;font-size:13px;line-height:15px;left:120.2px;">Kontrola automatického vyskladňování materiálu</span>
<div style="left:74.5px;top:514.9px;width:6px;height:1px;background-image:linear-gradient(90deg,#888 50%,transparent 50%);background-size:2px 1px;"></div>
<svg style="left:65px;top:511.1px;" width="9" height="9" viewBox="0 0 9 9"><rect x="0.5" y="0.5" width="8" height="8" rx="1.2" fill="#fff" stroke="#9a9a9a"/><path d="M2.2 4.5H6.8" stroke="#2a3f8f" stroke-width="1"/><path d="M4.5 2.2V6.8" stroke="#2a3f8f" stroke-width="1"/></svg>
<svg style="left:79.9px;top:507.9px;" width="15.2" height="12.3" viewBox="0 0 15.2 12.3"><path d="M0.2 3V0.9Q0.2 0.2 0.9 0.2H6.2Q6.9 0.2 6.9 0.9V3Z" fill="#49a2ca"/><rect x="1.2" y="1" width="4.6" height=".8" fill="#b5deef"/><rect x="0.2" y="2.5" width="14.9" height="9.6" rx=".5" fill="#3d9ac3"/><rect x="1" y="3.4" width="13.3" height="7.6" fill="url(#fg)"/><rect x="0.8" y="11" width="14.3" height="1.15" fill="url(#fb)"/><rect x="14.3" y="3" width=".8" height="9" fill="url(#fr)"/></svg>
<span class="t tree" style="top:507px;font-size:13px;line-height:15px;left:101.2px;letter-spacing:-0.302px;">Celní sklady</span>
<div style="left:74.5px;top:532.9px;width:6px;height:1px;background-image:linear-gradient(90deg,#888 50%,transparent 50%);background-size:2px 1px;"></div>
<svg style="left:65px;top:529.1px;" width="9" height="9" viewBox="0 0 9 9"><rect x="0.5" y="0.5" width="8" height="8" rx="1.2" fill="#fff" stroke="#9a9a9a"/><path d="M2.2 4.5H6.8" stroke="#2a3f8f" stroke-width="1"/></svg>
<svg style="left:79.9px;top:525.9px;" width="15.2" height="12.3" viewBox="0 0 15.2 12.3"><path d="M0.2 3V0.9Q0.2 0.2 0.9 0.2H6.2Q6.9 0.2 6.9 0.9V3Z" fill="#49a2ca"/><rect x="1.2" y="1" width="4.6" height=".8" fill="#b5deef"/><rect x="0.2" y="2.5" width="14.9" height="9.6" rx=".5" fill="#3d9ac3"/><rect x="1" y="3.4" width="13.3" height="7.6" fill="url(#fg)"/><rect x="0.8" y="11" width="14.3" height="1.15" fill="url(#fb)"/><rect x="14.3" y="3" width=".8" height="9" fill="url(#fr)"/></svg>
<span class="t tree" style="top:525px;font-size:13px;line-height:15px;left:101.2px;letter-spacing:-0.214px;">Hromadné operace skladů</span>
<div style="left:89.5px;top:550.9px;width:10px;height:1px;background-image:linear-gradient(90deg,#888 50%,transparent 50%);background-size:2px 1px;"></div>
<svg style="left:103.5px;top:544px;" width="7" height="12" viewBox="0 0 7 12"><path d="M0.3 0.3L6.8 6L0.3 11.7Z" fill="#1f6f92"/><path d="M0.3 0.3L2.2 2V10L0.3 11.7Z" fill="#3d8eb0"/></svg>
<span class="t tree" style="top:543px;font-size:13px;line-height:15px;left:120.2px;">Hromadná tvorba součtovaných skladových výdejek</span>
<div style="left:89.5px;top:568.9px;width:10px;height:1px;background-image:linear-gradient(90deg,#888 50%,transparent 50%);background-size:2px 1px;"></div>
<svg style="left:103.5px;top:562px;" width="7" height="12" viewBox="0 0 7 12"><path d="M0.3 0.3L6.8 6L0.3 11.7Z" fill="#1f6f92"/><path d="M0.3 0.3L2.2 2V10L0.3 11.7Z" fill="#3d8eb0"/></svg>
<span class="t tree" style="top:561px;font-size:13px;line-height:15px;left:120.2px;letter-spacing:-0.254px;">Hromadná tvorba skladových příjemek</span>
<div style="left:89.5px;top:586.9px;width:10px;height:1px;background-image:linear-gradient(90deg,#888 50%,transparent 50%);background-size:2px 1px;"></div>
<svg style="left:103.5px;top:580px;" width="7" height="12" viewBox="0 0 7 12"><path d="M0.3 0.3L6.8 6L0.3 11.7Z" fill="#1f6f92"/><path d="M0.3 0.3L2.2 2V10L0.3 11.7Z" fill="#3d8eb0"/></svg>
<span class="t tree" style="top:579px;font-size:13px;line-height:15px;left:120.2px;letter-spacing:-0.305px;">Hromadná tvorba skladových výdejek</span>
<div style="left:89.5px;top:604.9px;width:10px;height:1px;background-image:linear-gradient(90deg,#888 50%,transparent 50%);background-size:2px 1px;"></div>
<svg style="left:103.5px;top:598px;" width="7" height="12" viewBox="0 0 7 12"><path d="M0.3 0.3L6.8 6L0.3 11.7Z" fill="#1f6f92"/><path d="M0.3 0.3L2.2 2V10L0.3 11.7Z" fill="#3d8eb0"/></svg>
<span class="t tree" style="top:597px;font-size:13px;line-height:15px;left:120.2px;letter-spacing:-0.287px;">Hromadný výdej na žádanky</span>
<div style="left:89.5px;top:622.9px;width:10px;height:1px;background-image:linear-gradient(90deg,#888 50%,transparent 50%);background-size:2px 1px;"></div>
<svg style="left:103.5px;top:616px;" width="7" height="12" viewBox="0 0 7 12"><path d="M0.3 0.3L6.8 6L0.3 11.7Z" fill="#1f6f92"/><path d="M0.3 0.3L2.2 2V10L0.3 11.7Z" fill="#3d8eb0"/></svg>
<span class="t tree" style="top:615px;font-size:13px;line-height:15px;left:120.2px;letter-spacing:-0.292px;">Hromadné uzávěrky skladů</span>
<div style="left:70.5px;top:640.9px;width:10px;height:1px;background-image:linear-gradient(90deg,#888 50%,transparent 50%);background-size:2px 1px;"></div>
<svg style="left:84.5px;top:634px;" width="7" height="12" viewBox="0 0 7 12"><path d="M0.3 0.3L6.8 6L0.3 11.7Z" fill="#1f6f92"/><path d="M0.3 0.3L2.2 2V10L0.3 11.7Z" fill="#3d8eb0"/></svg>
<span class="t tree" style="top:633px;font-size:13px;line-height:15px;left:101.2px;letter-spacing:-0.228px;">Seznam inventur a uzávěrek skladů</span>
<div style="left:70.5px;top:658.9px;width:10px;height:1px;background-image:linear-gradient(90deg,#888 50%,transparent 50%);background-size:2px 1px;"></div>
<svg style="left:84.5px;top:652px;" width="7" height="12" viewBox="0 0 7 12"><path d="M0.3 0.3L6.8 6L0.3 11.7Z" fill="#1f6f92"/><path d="M0.3 0.3L2.2 2V10L0.3 11.7Z" fill="#3d8eb0"/></svg>
<span class="t tree" style="top:651px;font-size:13px;line-height:15px;left:101.2px;letter-spacing:-0.218px;">Odběr zboží z cizího konsignačního skladu</span>
<div style="left:70.5px;top:676.9px;width:10px;height:1px;background-image:linear-gradient(90deg,#888 50%,transparent 50%);background-size:2px 1px;"></div>
<svg style="left:84.5px;top:670px;" width="7" height="12" viewBox="0 0 7 12"><path d="M0.3 0.3L6.8 6L0.3 11.7Z" fill="#1f6f92"/><path d="M0.3 0.3L2.2 2V10L0.3 11.7Z" fill="#3d8eb0"/></svg>
<span class="t tree" style="top:669px;font-size:13px;line-height:15px;left:101.2px;letter-spacing:-0.351px;">Vychystávací seznam</span>
<div style="left:70.5px;top:694.9px;width:10px;height:1px;background-image:linear-gradient(90deg,#888 50%,transparent 50%);background-size:2px 1px;"></div>
<svg style="left:84.5px;top:688px;" width="7" height="12" viewBox="0 0 7 12"><path d="M0.3 0.3L6.8 6L0.3 11.7Z" fill="#1f6f92"/><path d="M0.3 0.3L2.2 2V10L0.3 11.7Z" fill="#3d8eb0"/></svg>
<span class="t tree" style="top:687px;font-size:13px;line-height:15px;left:101.2px;">Podklady pro výpočet minimálního a optimálního množství</span>
<div style="left:74.5px;top:712.9px;width:6px;height:1px;background-image:linear-gradient(90deg,#888 50%,transparent 50%);background-size:2px 1px;"></div>
<svg style="left:65px;top:709.1px;" width="9" height="9" viewBox="0 0 9 9"><rect x="0.5" y="0.5" width="8" height="8" rx="1.2" fill="#fff" stroke="#9a9a9a"/><path d="M2.2 4.5H6.8" stroke="#2a3f8f" stroke-width="1"/><path d="M4.5 2.2V6.8" stroke="#2a3f8f" stroke-width="1"/></svg>
<svg style="left:79.9px;top:705.9px;" width="15.2" height="12.3" viewBox="0 0 15.2 12.3"><path d="M0.2 3V0.9Q0.2 0.2 0.9 0.2H6.2Q6.9 0.2 6.9 0.9V3Z" fill="#49a2ca"/><rect x="1.2" y="1" width="4.6" height=".8" fill="#b5deef"/><rect x="0.2" y="2.5" width="14.9" height="9.6" rx=".5" fill="#3d9ac3"/><rect x="1" y="3.4" width="13.3" height="7.6" fill="url(#fg)"/><rect x="0.8" y="11" width="14.3" height="1.15" fill="url(#fb)"/><rect x="14.3" y="3" width=".8" height="9" fill="url(#fr)"/></svg>
<span class="t tree" style="top:705px;font-size:13px;line-height:15px;left:101.2px;letter-spacing:-0.073px;">Mobilní terminál (WMS)</span>
<div style="left:70.5px;top:730.9px;width:10px;height:1px;background-image:linear-gradient(90deg,#888 50%,transparent 50%);background-size:2px 1px;"></div>
<svg style="left:84.5px;top:724px;" width="7" height="12" viewBox="0 0 7 12"><path d="M0.3 0.3L6.8 6L0.3 11.7Z" fill="#1f6f92"/><path d="M0.3 0.3L2.2 2V10L0.3 11.7Z" fill="#3d8eb0"/></svg>
<span class="t tree" style="top:723px;font-size:13px;line-height:15px;left:101.2px;letter-spacing:-0.127px;">Seznam zboží pro přemístění</span>
<div style="left:70.5px;top:748.9px;width:10px;height:1px;background-image:linear-gradient(90deg,#888 50%,transparent 50%);background-size:2px 1px;"></div>
<svg style="left:84.5px;top:742px;" width="7" height="12" viewBox="0 0 7 12"><path d="M0.3 0.3L6.8 6L0.3 11.7Z" fill="#1f6f92"/><path d="M0.3 0.3L2.2 2V10L0.3 11.7Z" fill="#3d8eb0"/></svg>
<span class="t tree" style="top:741px;font-size:13px;line-height:15px;left:101.2px;letter-spacing:-0.273px;">Seznam povolených skladových pozic zboží</span>
<div style="left:55.5px;top:766.9px;width:6px;height:1px;background-image:linear-gradient(90deg,#888 50%,transparent 50%);background-size:2px 1px;"></div>
<svg style="left:46px;top:763.1px;" width="9" height="9" viewBox="0 0 9 9"><rect x="0.5" y="0.5" width="8" height="8" rx="1.2" fill="#fff" stroke="#9a9a9a"/><path d="M2.2 4.5H6.8" stroke="#2a3f8f" stroke-width="1"/><path d="M4.5 2.2V6.8" stroke="#2a3f8f" stroke-width="1"/></svg>
<svg style="left:60.9px;top:759.9px;" width="15.2" height="12.3" viewBox="0 0 15.2 12.3"><path d="M0.2 3V0.9Q0.2 0.2 0.9 0.2H6.2Q6.9 0.2 6.9 0.9V3Z" fill="#49a2ca"/><rect x="1.2" y="1" width="4.6" height=".8" fill="#b5deef"/><rect x="0.2" y="2.5" width="14.9" height="9.6" rx=".5" fill="#3d9ac3"/><rect x="1" y="3.4" width="13.3" height="7.6" fill="url(#fg)"/><rect x="0.8" y="11" width="14.3" height="1.15" fill="url(#fb)"/><rect x="14.3" y="3" width=".8" height="9" fill="url(#fr)"/></svg>
<span class="t tree" style="top:759px;font-size:13px;line-height:15px;left:82.2px;letter-spacing:-0.422px;">Doprava</span>
<div style="left:55.5px;top:784.9px;width:6px;height:1px;background-image:linear-gradient(90deg,#888 50%,transparent 50%);background-size:2px 1px;"></div>
<svg style="left:46px;top:781.1px;" width="9" height="9" viewBox="0 0 9 9"><rect x="0.5" y="0.5" width="8" height="8" rx="1.2" fill="#fff" stroke="#9a9a9a"/><path d="M2.2 4.5H6.8" stroke="#2a3f8f" stroke-width="1"/><path d="M4.5 2.2V6.8" stroke="#2a3f8f" stroke-width="1"/></svg>
<svg style="left:60.9px;top:777.9px;" width="15.2" height="12.3" viewBox="0 0 15.2 12.3"><path d="M0.2 3V0.9Q0.2 0.2 0.9 0.2H6.2Q6.9 0.2 6.9 0.9V3Z" fill="#49a2ca"/><rect x="1.2" y="1" width="4.6" height=".8" fill="#b5deef"/><rect x="0.2" y="2.5" width="14.9" height="9.6" rx=".5" fill="#3d9ac3"/><rect x="1" y="3.4" width="13.3" height="7.6" fill="url(#fg)"/><rect x="0.8" y="11" width="14.3" height="1.15" fill="url(#fb)"/><rect x="14.3" y="3" width=".8" height="9" fill="url(#fr)"/></svg>
<span class="t tree" style="top:777px;font-size:13px;line-height:15px;left:82.2px;letter-spacing:-0.204px;">Personalistika</span>
<div style="left:55.5px;top:802.9px;width:6px;height:1px;background-image:linear-gradient(90deg,#888 50%,transparent 50%);background-size:2px 1px;"></div>
<svg style="left:46px;top:799.1px;" width="9" height="9" viewBox="0 0 9 9"><rect x="0.5" y="0.5" width="8" height="8" rx="1.2" fill="#fff" stroke="#9a9a9a"/><path d="M2.2 4.5H6.8" stroke="#2a3f8f" stroke-width="1"/><path d="M4.5 2.2V6.8" stroke="#2a3f8f" stroke-width="1"/></svg>
<svg style="left:60.9px;top:795.9px;" width="15.2" height="12.3" viewBox="0 0 15.2 12.3"><path d="M0.2 3V0.9Q0.2 0.2 0.9 0.2H6.2Q6.9 0.2 6.9 0.9V3Z" fill="#49a2ca"/><rect x="1.2" y="1" width="4.6" height=".8" fill="#b5deef"/><rect x="0.2" y="2.5" width="14.9" height="9.6" rx=".5" fill="#3d9ac3"/><rect x="1" y="3.4" width="13.3" height="7.6" fill="url(#fg)"/><rect x="0.8" y="11" width="14.3" height="1.15" fill="url(#fb)"/><rect x="14.3" y="3" width=".8" height="9" fill="url(#fr)"/></svg>
<span class="t tree" style="top:795px;font-size:13px;line-height:15px;left:82.2px;letter-spacing:-0.42px;">Mzdy</span>
<div style="left:55.5px;top:820.9px;width:6px;height:1px;background-image:linear-gradient(90deg,#888 50%,transparent 50%);background-size:2px 1px;"></div>
<svg style="left:46px;top:817.1px;" width="9" height="9" viewBox="0 0 9 9"><rect x="0.5" y="0.5" width="8" height="8" rx="1.2" fill="#fff" stroke="#9a9a9a"/><path d="M2.2 4.5H6.8" stroke="#2a3f8f" stroke-width="1"/><path d="M4.5 2.2V6.8" stroke="#2a3f8f" stroke-width="1"/></svg>
<svg style="left:60.9px;top:813.9px;" width="15.2" height="12.3" viewBox="0 0 15.2 12.3"><path d="M0.2 3V0.9Q0.2 0.2 0.9 0.2H6.2Q6.9 0.2 6.9 0.9V3Z" fill="#49a2ca"/><rect x="1.2" y="1" width="4.6" height=".8" fill="#b5deef"/><rect x="0.2" y="2.5" width="14.9" height="9.6" rx=".5" fill="#3d9ac3"/><rect x="1" y="3.4" width="13.3" height="7.6" fill="url(#fg)"/><rect x="0.8" y="11" width="14.3" height="1.15" fill="url(#fb)"/><rect x="14.3" y="3" width=".8" height="9" fill="url(#fr)"/></svg>
<span class="t tree" style="top:813px;font-size:13px;line-height:15px;left:82.2px;letter-spacing:-0.124px;">Majetek</span>
<div style="left:55.5px;top:838.9px;width:6px;height:1px;background-image:linear-gradient(90deg,#888 50%,transparent 50%);background-size:2px 1px;"></div>
<svg style="left:46px;top:835.1px;" width="9" height="9" viewBox="0 0 9 9"><rect x="0.5" y="0.5" width="8" height="8" rx="1.2" fill="#fff" stroke="#9a9a9a"/><path d="M2.2 4.5H6.8" stroke="#2a3f8f" stroke-width="1"/><path d="M4.5 2.2V6.8" stroke="#2a3f8f" stroke-width="1"/></svg>
<svg style="left:60.9px;top:831.9px;" width="15.2" height="12.3" viewBox="0 0 15.2 12.3"><path d="M0.2 3V0.9Q0.2 0.2 0.9 0.2H6.2Q6.9 0.2 6.9 0.9V3Z" fill="#49a2ca"/><rect x="1.2" y="1" width="4.6" height=".8" fill="#b5deef"/><rect x="0.2" y="2.5" width="14.9" height="9.6" rx=".5" fill="#3d9ac3"/><rect x="1" y="3.4" width="13.3" height="7.6" fill="url(#fg)"/><rect x="0.8" y="11" width="14.3" height="1.15" fill="url(#fb)"/><rect x="14.3" y="3" width=".8" height="9" fill="url(#fr)"/></svg>
<span class="t tree" style="top:831px;font-size:13px;line-height:15px;left:82.2px;letter-spacing:-0.056px;">Procesy, workflow</span>
<div style="left:55.5px;top:856.9px;width:6px;height:1px;background-image:linear-gradient(90deg,#888 50%,transparent 50%);background-size:2px 1px;"></div>
<svg style="left:46px;top:853.1px;" width="9" height="9" viewBox="0 0 9 9"><rect x="0.5" y="0.5" width="8" height="8" rx="1.2" fill="#fff" stroke="#9a9a9a"/><path d="M2.2 4.5H6.8" stroke="#2a3f8f" stroke-width="1"/><path d="M4.5 2.2V6.8" stroke="#2a3f8f" stroke-width="1"/></svg>
<svg style="left:60.9px;top:849.9px;" width="15.2" height="12.3" viewBox="0 0 15.2 12.3"><path d="M0.2 3V0.9Q0.2 0.2 0.9 0.2H6.2Q6.9 0.2 6.9 0.9V3Z" fill="#49a2ca"/><rect x="1.2" y="1" width="4.6" height=".8" fill="#b5deef"/><rect x="0.2" y="2.5" width="14.9" height="9.6" rx=".5" fill="#3d9ac3"/><rect x="1" y="3.4" width="13.3" height="7.6" fill="url(#fg)"/><rect x="0.8" y="11" width="14.3" height="1.15" fill="url(#fb)"/><rect x="14.3" y="3" width=".8" height="9" fill="url(#fr)"/></svg>
<span class="t tree" style="top:849px;font-size:13px;line-height:15px;left:82.2px;letter-spacing:-0.154px;">Projekty</span>
</div>
<div style="left:405px;top:48.5px;width:16px;height:868px;background:#f1f5fa;"></div>
<div style="left:405px;top:48.5px;width:16px;height:18px;background:#fafcfe;"></div>
<div style="left:405px;top:428px;width:16px;height:347px;background:#dbe7f5;"></div>
<svg style="left:409.5px;top:55px;" width="8" height="7" viewBox="0 0 8 7"><path d="M0.8 5.6L4 2L7.2 5.6" fill="none" stroke="#0a1420" stroke-width="2"/></svg>
<svg style="left:409.5px;top:904.5px;" width="8" height="7" viewBox="0 0 8 7"><path d="M0.8 1.4L4 5L7.2 1.4" fill="none" stroke="#0a1420" stroke-width="2"/></svg>
<div style="left:28px;top:916.5px;width:377px;height:17px;background:#f1f5fa;"></div>
<div style="left:28px;top:916.5px;width:18px;height:17px;background:#fafcfe;"></div>
<div style="left:387px;top:916.5px;width:18px;height:17px;background:#fafcfe;"></div>
<div style="left:405px;top:916.5px;width:16px;height:17px;background:#fff;"></div>
<div style="left:46px;top:916.5px;width:241px;height:17px;background:#dbe7f5;"></div>
<svg style="left:33.5px;top:921px;" width="7" height="8" viewBox="0 0 7 8"><path d="M5.6 0.8L2 4L5.6 7.2" fill="none" stroke="#0a1420" stroke-width="2"/></svg>
<svg style="left:393px;top:921px;" width="7" height="8" viewBox="0 0 7 8"><path d="M1.4 0.8L5 4L1.4 7.2" fill="none" stroke="#0a1420" stroke-width="2"/></svg>
<div style="left:27px;top:937.5px;width:401px;height:1.5px;background:#a9c8ea;"></div>
</div>
<div style="left:428px;top:72px;width:1250px;height:938px;overflow:hidden;background:#004a98;">
<svg style="left:0px;top:0px;" width="1252" height="938" viewBox="428 72 1252 938"><path d="M518.3 72V1010M657.9 72V1010M797.5 72V1010M937.1 72V1010M1076.7 72V1010M1216.3 72V1010M1355.9 72V1010M428 211.6H1495M1540 211.6H1680M428 351.2H1495M1540 351.2H1680M428 490.8H1495M1540 490.8H1680M428 630.4H1495M1540 630.4H1680M428 770H1495M1540 770H1680M428 909.6H1495M1540 909.6H1680" stroke="#fff" stroke-width="1.35" fill="none"/><rect x="1504.47" y="72" width="34.9" height="139.6" fill="#fff"/><path d="M1495.75 72V1010M1504.47 72V1010M1513.2 72V1010M1521.92 72V1010M1530.65 72V1010M1539.38 72V1010M1495.75 72H1539.38M1495.75 80.72H1539.38M1495.75 89.45H1539.38M1495.75 98.17H1539.38M1495.75 106.9H1539.38M1495.75 115.62H1539.38M1495.75 124.35H1539.38M1495.75 133.07H1539.38M1495.75 141.8H1539.38M1495.75 150.52H1539.38M1495.75 159.25H1539.38M1495.75 167.97H1539.38M1495.75 176.7H1539.38M1495.75 185.42H1539.38M1495.75 194.15H1539.38M1495.75 202.87H1539.38M1495.75 211.6H1539.38M1495.75 220.32H1539.38M1495.75 229.05H1539.38M1495.75 237.77H1539.38M1495.75 246.5H1539.38M1495.75 255.22H1539.38M1495.75 263.95H1539.38M1495.75 272.67H1539.38M1495.75 281.4H1539.38M1495.75 290.12H1539.38M1495.75 298.85H1539.38M1495.75 307.57H1539.38M1495.75 316.3H1539.38M1495.75 325.03H1539.38M1495.75 333.75H1539.38M1495.75 342.48H1539.38M1495.75 351.2H1539.38M1495.75 359.93H1539.38M1495.75 368.65H1539.38M1495.75 377.38H1539.38M1495.75 386.1H1539.38M1495.75 394.83H1539.38M1495.75 403.55H1539.38M1495.75 412.28H1539.38M1495.75 421H1539.38M1495.75 429.73H1539.38M1495.75 438.45H1539.38M1495.75 447.18H1539.38M1495.75 455.9H1539.38M1495.75 464.63H1539.38M1495.75 473.35H1539.38M1495.75 482.08H1539.38M1495.75 490.8H1539.38M1495.75 499.53H1539.38M1495.75 508.25H1539.38M1495.75 516.98H1539.38M1495.75 525.7H1539.38M1495.75 534.43H1539.38M1495.75 543.15H1539.38M1495.75 551.88H1539.38M1495.75 560.6H1539.38M1495.75 569.33H1539.38M1495.75 578.05H1539.38M1495.75 586.78H1539.38M1495.75 595.5H1539.38M1495.75 604.23H1539.38M1495.75 612.95H1539.38M1495.75 621.68H1539.38M1495.75 630.4H1539.38M1495.75 639.13H1539.38M1495.75 647.85H1539.38M1495.75 656.58H1539.38M1495.75 665.3H1539.38M1495.75 674.03H1539.38M1495.75 682.75H1539.38M1495.75 691.48H1539.38M1495.75 700.2H1539.38M1495.75 708.93H1539.38M1495.75 717.65H1539.38M1495.75 726.38H1539.38M1495.75 735.1H1539.38M1495.75 743.83H1539.38M1495.75 752.55H1539.38M1495.75 761.28H1539.38M1495.75 770H1539.38M1495.75 778.73H1539.38M1495.75 787.45H1539.38M1495.75 796.18H1539.38M1495.75 804.9H1539.38M1495.75 813.63H1539.38M1495.75 822.35H1539.38M1495.75 831.08H1539.38M1495.75 839.8H1539.38M1495.75 848.53H1539.38M1495.75 857.25H1539.38M1495.75 865.98H1539.38M1495.75 874.7H1539.38M1495.75 883.43H1539.38M1495.75 892.15H1539.38M1495.75 900.88H1539.38M1495.75 909.6H1539.38M1495.75 918.33H1539.38M1495.75 927.05H1539.38M1495.75 935.78H1539.38M1495.75 944.5H1539.38M1495.75 953.23H1539.38M1495.75 961.95H1539.38M1495.75 970.68H1539.38M1495.75 979.4H1539.38M1495.75 988.13H1539.38M1495.75 996.85H1539.38M1495.75 1005.58H1539.38" stroke="#fff" stroke-width="1.25" fill="none"/><path d="M1495.75 72V1010M1539.38 72V1010" stroke="#fff" stroke-width="1.8" fill="none"/><rect x="1505.22" y="107.65" width="7.22" height="7.22" fill="#004a98"/><rect x="1513.95" y="107.65" width="7.22" height="7.22" fill="#004a98"/><rect x="1522.67" y="107.65" width="7.22" height="7.22" fill="#004a98"/><rect x="1531.4" y="107.65" width="7.22" height="7.22" fill="#004a98"/><circle cx="1426.1" cy="141.8" r="69.6" fill="#fff"/><circle cx="1426.1" cy="141.8" r="36.5" fill="#004a98"/><path d="M1426.1 105.30000000000001V178.3M1389.6 141.8H1462.6" stroke="#fff" stroke-width="1.4"/><path d="M1449.6999999999998 141.8L1426.1 165.4L1471.5 211.4L1495.6999999999998 187.20000000000002Z" fill="#fff"/></svg>
<span class="t s" style="top:9px;font-size:21px;line-height:23px;left:1118.5px;color:#fff;font-weight:bold;letter-spacing:0.241px;">CENTRÁLNÍ</span>
<span class="t s" style="top:33px;font-size:21px;line-height:23px;left:1118.5px;color:#fff;font-weight:bold;letter-spacing:0.834px;">MOZEK</span>
<span class="t s" style="top:56px;font-size:21px;line-height:23px;left:1118.5px;color:#fff;font-weight:bold;letter-spacing:0.134px;">FIRMY</span>
<svg style="left:1164px;top:187px;" width="34" height="28" viewBox="0 0 34 28"><rect x="1.2" y="2.9" width="9.2" height="5" fill="#d2d2d2"/><rect x="3.2" y="7.9" width="7.2" height="6.6" fill="#e3242b"/><path d="M1.2 14.7L10.4 14.3L10.6 19.6L1.6 20.2Z" fill="#d2d2d2"/><rect x="10.4" y="1.7" width="1.5" height="19" fill="#6b6459"/><rect x="1.8" y="19.7" width="10" height="1" fill="#6b6459"/><path d="M18.4 1.4H31.4Q32.6 1.4 32.6 2.6V19.6H13Z" fill="#e8262c"/><path d="M19 2.9H24V13H16Z" fill="#fff"/><path d="M25.5 2.9H31.7V13H25.5Z" fill="#fff"/><circle cx="18.4" cy="20.1" r="3.3" fill="#6b6459"/><circle cx="27.8" cy="21" r="2.5" fill="#6b6459"/><ellipse cx="19" cy="26.3" rx="15" ry="1.2" fill="#6d7fa6" opacity=".35"/></svg>
<span class="t" style="top:222px;left:1149.4px;color:#fff;letter-spacing:-0.365px;">Řízení skladů</span>
<div style="left:20px;top:19px;width:876px;height:637.8px;overflow:hidden;background:#fff;">
<div style="left:0px;top:0px;width:876px;height:27.7px;background:#ebebeb;"></div>
<div style="left:0px;top:27px;width:876px;height:1px;background:#dde6f2;"></div>
<svg style="left:6.5px;top:6px;" width="15" height="17" viewBox="0 0 15 17"><path d="M0.5 0.5L14.5 8.5L0.5 16.5Z" fill="#fff"/><path d="M3 12.5L10.5 8.8" stroke="#c8c8c8" stroke-width="1.3"/><path d="M1.5 2.5L2.5 1.5" stroke="#ddd" stroke-width="1"/></svg>
<span class="t" style="top:8px;left:26px;color:#4a4a4a;font-weight:bold;letter-spacing:-0.041px;">Řízení skladů</span>
<span class="t" style="top:8px;right:84.5px;color:#5a5048;font-weight:bold;">9</span>
<svg style="left:802px;top:8px;" width="64" height="14" viewBox="0 0 64 14"><path d="M1 6.5H11" stroke="#111" stroke-width="1"/><rect x="26.6" y="2.6" width="9.8" height="9.8" fill="none" stroke="#111" stroke-width="1.2"/><path d="M51.5 2.5L61 12M61 2.5L51.5 12" stroke="#111" stroke-width="2.4"/></svg>
<div style="left:12px;top:56px;width:852px;height:566px;background:#fafcff;border:1px solid #cbdbf7;"></div>
<div style="left:96.5px;top:36.3px;width:68px;height:21px;background:#fafcff;border:1px solid #cbdbf7;border-bottom:none;"></div>
<span class="t" style="top:40px;left:21px;letter-spacing:-0.231px;">Výdej</span>
<span class="t" style="top:40px;left:61.5px;letter-spacing:-0.38px;">Příjem</span>
<span class="t" style="top:40px;left:103.5px;letter-spacing:-0.158px;">Stav zásob</span>
<span class="t" style="top:40px;left:168.5px;letter-spacing:0.015px;">Inventury, uzávěrky</span>
<span class="t" style="top:40px;left:279.5px;letter-spacing:-0.31px;">Sumární přehledy</span>
<div style="left:25px;top:69px;width:686px;height:543px;background:#f5f9ff;border:1px solid #cbdbf7;"></div>
<div style="left:26px;top:70px;width:684px;height:17.7px;background:linear-gradient(#ffffff,#eef4fe);"></div>
<span class="t" style="top:73px;left:29.2px;letter-spacing:-0.394px;">Číslo skladu</span>
<div style="left:84.5px;top:70px;width:1px;height:17.7px;background:#dbe6f8;"></div>
<span class="t" style="top:73px;left:88.2px;letter-spacing:-0.276px;">Název skladu</span>
<div style="left:296.1px;top:70px;width:1px;height:17.7px;background:#dbe6f8;"></div>
<span class="t" style="top:73px;left:299.8px;letter-spacing:-0.161px;">Sklad pro prodej a spotřebu</span>
<div style="left:434.1px;top:70px;width:1px;height:17.7px;background:#dbe6f8;"></div>
<span class="t" style="top:73px;left:437.8px;letter-spacing:-0.201px;">Metoda vyskladňování</span>
<div style="left:545.7px;top:70px;width:1px;height:17.7px;background:#dbe6f8;"></div>
<span class="t" style="top:73px;left:549.4px;">Typ skladu</span>
<div style="left:610.9px;top:70px;width:1px;height:17.7px;background:#dbe6f8;"></div>
<span class="t" style="top:73px;left:614.6px;">Vytvářet kor...</span>
<div style="left:692.5px;top:70px;width:1px;height:17.7px;background:#dbe6f8;"></div>
<div style="left:26px;top:87.7px;width:667px;height:18px;background:#e1ebfd;"></div>
<span class="t" style="top:91px;left:27.2px;letter-spacing:-0.449px;">SHV1</span>
<span class="t" style="top:91px;left:86.2px;letter-spacing:-0.11px;">Hotové výrobky - kola, rámy</span>
<svg style="left:359.1px;top:90.2px;" width="13" height="13" viewBox="0 0 13 13"><rect x="0.5" y="0.5" width="12" height="12" fill="#fdfdfd" stroke="#bcbcbc"/><path d="M3 6.6L5.4 9.2L10 3.4" fill="none" stroke="#a8a8a8" stroke-width="1.6"/></svg>
<span class="t" style="top:91px;left:435.8px;">Vážený průměr</span>
<span class="t" style="top:91px;left:547.4px;">Normální</span>
<div style="left:84.5px;top:87.7px;width:1px;height:18px;background:#e9f0fb;"></div>
<div style="left:296.1px;top:87.7px;width:1px;height:18px;background:#e9f0fb;"></div>
<div style="left:434.1px;top:87.7px;width:1px;height:18px;background:#e9f0fb;"></div>
<div style="left:545.7px;top:87.7px;width:1px;height:18px;background:#e9f0fb;"></div>
<div style="left:610.9px;top:87.7px;width:1px;height:18px;background:#e9f0fb;"></div>
<div style="left:26px;top:105.7px;width:667px;height:18px;background:#004b73;"></div>
<span class="t" style="top:109px;left:27.2px;color:#fff;letter-spacing:-0.17px;">SMAT</span>
<span class="t" style="top:109px;left:86.2px;color:#fff;letter-spacing:-0.245px;">Materiál, náhradní díly</span>
<svg style="left:359.1px;top:108.2px;" width="13" height="13" viewBox="0 0 13 13"><rect x="0.5" y="0.5" width="12" height="12" fill="#8ca2b4" stroke="#8ca2b4"/><path d="M3 6.6L5.4 9.2L10 3.4" fill="none" stroke="#e8eef2" stroke-width="1.6"/></svg>
<span class="t" style="top:109px;left:435.8px;color:#fff;">Vážený průměr</span>
<span class="t" style="top:109px;left:547.4px;color:#fff;">Normální</span>
<div style="left:84.5px;top:105.7px;width:1px;height:18px;background:#d8e4f0;"></div>
<div style="left:296.1px;top:105.7px;width:1px;height:18px;background:#d8e4f0;"></div>
<div style="left:434.1px;top:105.7px;width:1px;height:18px;background:#d8e4f0;"></div>
<div style="left:545.7px;top:105.7px;width:1px;height:18px;background:#d8e4f0;"></div>
<div style="left:610.9px;top:105.7px;width:1px;height:18px;background:#d8e4f0;"></div>
<div style="left:26px;top:123.7px;width:667px;height:18px;background:#e1ebfd;"></div>
<span class="t" style="top:127px;left:27.2px;">SPOL</span>
<span class="t" style="top:127px;left:86.2px;letter-spacing:-0.099px;">Polotovary - rámy</span>
<svg style="left:359.1px;top:126.2px;" width="13" height="13" viewBox="0 0 13 13"><rect x="0.5" y="0.5" width="12" height="12" fill="#fdfdfd" stroke="#bcbcbc"/><path d="M3 6.6L5.4 9.2L10 3.4" fill="none" stroke="#a8a8a8" stroke-width="1.6"/></svg>
<span class="t" style="top:127px;left:435.8px;">FIFO</span>
<span class="t" style="top:127px;left:547.4px;">Normální</span>
<div style="left:84.5px;top:123.7px;width:1px;height:18px;background:#e9f0fb;"></div>
<div style="left:296.1px;top:123.7px;width:1px;height:18px;background:#e9f0fb;"></div>
<div style="left:434.1px;top:123.7px;width:1px;height:18px;background:#e9f0fb;"></div>
<div style="left:545.7px;top:123.7px;width:1px;height:18px;background:#e9f0fb;"></div>
<div style="left:610.9px;top:123.7px;width:1px;height:18px;background:#e9f0fb;"></div>
<div style="left:26px;top:141.7px;width:667px;height:18px;background:#cddcfb;"></div>
<span class="t" style="top:145px;left:27.2px;">REKL</span>
<span class="t" style="top:145px;left:86.2px;letter-spacing:-0.407px;">Reklamace</span>
<svg style="left:359.1px;top:144.2px;" width="13" height="13" viewBox="0 0 13 13"><rect x="0.5" y="0.5" width="12" height="12" fill="#fdfdfd" stroke="#bcbcbc"/><path d="M3 6.6L5.4 9.2L10 3.4" fill="none" stroke="#a8a8a8" stroke-width="1.6"/></svg>
<span class="t" style="top:145px;left:435.8px;">Vážený průměr</span>
<span class="t" style="top:145px;left:547.4px;">Normální</span>
<div style="left:84.5px;top:141.7px;width:1px;height:18px;background:#e9f0fb;"></div>
<div style="left:296.1px;top:141.7px;width:1px;height:18px;background:#e9f0fb;"></div>
<div style="left:434.1px;top:141.7px;width:1px;height:18px;background:#e9f0fb;"></div>
<div style="left:545.7px;top:141.7px;width:1px;height:18px;background:#e9f0fb;"></div>
<div style="left:610.9px;top:141.7px;width:1px;height:18px;background:#e9f0fb;"></div>
<div style="left:26px;top:159.7px;width:667px;height:18px;background:#e1ebfd;"></div>
<span class="t" style="top:163px;left:27.2px;">OBAL</span>
<span class="t" style="top:163px;left:86.2px;">Obaly</span>
<svg style="left:359.1px;top:162.2px;" width="13" height="13" viewBox="0 0 13 13"><rect x="0.5" y="0.5" width="12" height="12" fill="#fdfdfd" stroke="#bcbcbc"/><path d="M3 6.6L5.4 9.2L10 3.4" fill="none" stroke="#a8a8a8" stroke-width="1.6"/></svg>
<span class="t" style="top:163px;left:435.8px;">Vážený průměr</span>
<span class="t" style="top:163px;left:547.4px;">Normální</span>
<div style="left:84.5px;top:159.7px;width:1px;height:18px;background:#e9f0fb;"></div>
<div style="left:296.1px;top:159.7px;width:1px;height:18px;background:#e9f0fb;"></div>
<div style="left:434.1px;top:159.7px;width:1px;height:18px;background:#e9f0fb;"></div>
<div style="left:545.7px;top:159.7px;width:1px;height:18px;background:#e9f0fb;"></div>
<div style="left:610.9px;top:159.7px;width:1px;height:18px;background:#e9f0fb;"></div>
<div style="left:26px;top:177.7px;width:667px;height:18px;background:#cddcfb;"></div>
<span class="t" style="top:181px;left:27.2px;letter-spacing:-0.234px;">KANP</span>
<span class="t" style="top:181px;left:86.2px;letter-spacing:-0.176px;">Kancelářské potřeby</span>
<svg style="left:359.1px;top:180.2px;" width="13" height="13" viewBox="0 0 13 13"><rect x="0.5" y="0.5" width="12" height="12" fill="#fdfdfd" stroke="#bcbcbc"/><path d="M3 6.6L5.4 9.2L10 3.4" fill="none" stroke="#a8a8a8" stroke-width="1.6"/></svg>
<span class="t" style="top:181px;left:435.8px;">Vážený průměr</span>
<span class="t" style="top:181px;left:547.4px;">Normální</span>
<div style="left:84.5px;top:177.7px;width:1px;height:18px;background:#e9f0fb;"></div>
<div style="left:296.1px;top:177.7px;width:1px;height:18px;background:#e9f0fb;"></div>
<div style="left:434.1px;top:177.7px;width:1px;height:18px;background:#e9f0fb;"></div>
<div style="left:545.7px;top:177.7px;width:1px;height:18px;background:#e9f0fb;"></div>
<div style="left:610.9px;top:177.7px;width:1px;height:18px;background:#e9f0fb;"></div>
<div style="left:26px;top:195.7px;width:667px;height:18px;background:#e1ebfd;"></div>
<span class="t" style="top:199px;left:27.2px;">PROD</span>
<span class="t" style="top:199px;left:86.2px;">Prodejna</span>
<svg style="left:359.1px;top:198.2px;" width="13" height="13" viewBox="0 0 13 13"><rect x="0.5" y="0.5" width="12" height="12" fill="#fdfdfd" stroke="#bcbcbc"/><path d="M3 6.6L5.4 9.2L10 3.4" fill="none" stroke="#a8a8a8" stroke-width="1.6"/></svg>
<span class="t" style="top:199px;left:435.8px;">Vážený průměr</span>
<span class="t" style="top:199px;left:547.4px;">Normální</span>
<div style="left:84.5px;top:195.7px;width:1px;height:18px;background:#e9f0fb;"></div>
<div style="left:296.1px;top:195.7px;width:1px;height:18px;background:#e9f0fb;"></div>
<div style="left:434.1px;top:195.7px;width:1px;height:18px;background:#e9f0fb;"></div>
<div style="left:545.7px;top:195.7px;width:1px;height:18px;background:#e9f0fb;"></div>
<div style="left:610.9px;top:195.7px;width:1px;height:18px;background:#e9f0fb;"></div>
<div style="left:26px;top:213.7px;width:667px;height:18px;background:#cddcfb;"></div>
<span class="t" style="top:217px;left:27.2px;">KONS</span>
<span class="t" style="top:217px;left:86.2px;">Konsignační sklad</span>
<svg style="left:359.1px;top:216.2px;" width="13" height="13" viewBox="0 0 13 13"><rect x="0.5" y="0.5" width="12" height="12" fill="#fdfdfd" stroke="#bcbcbc"/><path d="M3 6.6L5.4 9.2L10 3.4" fill="none" stroke="#a8a8a8" stroke-width="1.6"/></svg>
<span class="t" style="top:217px;left:435.8px;">Vážený průměr</span>
<span class="t" style="top:217px;left:547.4px;">Normální</span>
<div style="left:84.5px;top:213.7px;width:1px;height:18px;background:#e9f0fb;"></div>
<div style="left:296.1px;top:213.7px;width:1px;height:18px;background:#e9f0fb;"></div>
<div style="left:434.1px;top:213.7px;width:1px;height:18px;background:#e9f0fb;"></div>
<div style="left:545.7px;top:213.7px;width:1px;height:18px;background:#e9f0fb;"></div>
<div style="left:610.9px;top:213.7px;width:1px;height:18px;background:#e9f0fb;"></div>
<div style="left:26px;top:231.7px;width:667px;height:18px;background:#e1ebfd;"></div>
<span class="t" style="top:235px;left:27.2px;">BAZA</span>
<span class="t" style="top:235px;left:86.2px;">Bazar</span>
<svg style="left:359.1px;top:234.2px;" width="13" height="13" viewBox="0 0 13 13"><rect x="0.5" y="0.5" width="12" height="12" fill="#fdfdfd" stroke="#bcbcbc"/><path d="M3 6.6L5.4 9.2L10 3.4" fill="none" stroke="#a8a8a8" stroke-width="1.6"/></svg>
<span class="t" style="top:235px;left:435.8px;">Vážený průměr</span>
<span class="t" style="top:235px;left:547.4px;">Normální</span>
<div style="left:84.5px;top:231.7px;width:1px;height:18px;background:#e9f0fb;"></div>
<div style="left:296.1px;top:231.7px;width:1px;height:18px;background:#e9f0fb;"></div>
<div style="left:434.1px;top:231.7px;width:1px;height:18px;background:#e9f0fb;"></div>
<div style="left:545.7px;top:231.7px;width:1px;height:18px;background:#e9f0fb;"></div>
<div style="left:610.9px;top:231.7px;width:1px;height:18px;background:#e9f0fb;"></div>
<div style="left:693px;top:70px;width:17px;height:524px;background:#f1f5fa;"></div>
<div style="left:693px;top:70px;width:17px;height:17.7px;background:#fcfdff;"></div>
<div style="left:693px;top:116px;width:17px;height:433px;background:#dbe7f5;"></div>
<svg style="left:697.5px;top:75.5px;" width="8" height="7" viewBox="0 0 8 7"><path d="M0.8 5.6L4 2L7.2 5.6" fill="none" stroke="#0a1420" stroke-width="2"/></svg>
<div style="left:26px;top:594px;width:684px;height:17px;background:#f1f5fa;"></div>
<div style="left:26px;top:594px;width:17px;height:17px;background:#fcfdff;"></div>
<svg style="left:31px;top:598.5px;" width="7" height="8" viewBox="0 0 7 8"><path d="M5.6 0.8L2 4L5.6 7.2" fill="none" stroke="#0a1420" stroke-width="2"/></svg>
<div style="left:44px;top:594px;width:208px;height:17px;background:#dbe7f5;"></div>
<div style="left:724px;top:68px;width:128px;height:22px;background:#4e88b8;"></div>
<span class="t" style="top:73px;left:588px;width:400px;text-align:center;color:#fff;letter-spacing:-0.158px;">Stav zásob</span>
<div style="left:724px;top:96px;width:128px;height:22px;background:#4e88b8;"></div>
<span class="t" style="top:101px;left:588px;width:400px;text-align:center;color:#fff;letter-spacing:-0.053px;">Podrobný stav zásob</span>
<div style="left:724px;top:124px;width:128px;height:22px;background:#4e88b8;"></div>
<span class="t" style="top:129px;left:588px;width:400px;text-align:center;color:#fff;letter-spacing:-0.201px;">Řešení záměny</span>
<div style="left:724px;top:152px;width:128px;height:22px;background:#4e88b8;"></div>
</div>
<div style="left:60px;top:178.2px;width:956px;height:637.1px;overflow:hidden;background:#fff;">
<div style="left:0px;top:0px;width:956px;height:27.7px;background:#ebebeb;"></div>
<div style="left:0px;top:27px;width:956px;height:1px;background:#dde6f2;"></div>
<div style="left:0px;top:0px;width:1px;height:637.1px;background:#c4c4c4;"></div>
<svg style="left:6.5px;top:6px;" width="15" height="17" viewBox="0 0 15 17"><path d="M0.5 0.5L14.5 8.5L0.5 16.5Z" fill="#fff"/><path d="M3 12.5L10.5 8.8" stroke="#c8c8c8" stroke-width="1.3"/><path d="M1.5 2.5L2.5 1.5" stroke="#ddd" stroke-width="1"/></svg>
<span class="t" style="top:7.8px;left:26px;color:#4a4a4a;font-weight:bold;letter-spacing:0.047px;">Stav zásob zboží na jednom skladu</span>
<span class="t" style="top:7.8px;right:84.5px;color:#5a5048;font-weight:bold;">462</span>
<svg style="left:882px;top:7.8px;" width="64" height="14" viewBox="0 0 64 14"><path d="M1 6.5H11" stroke="#111" stroke-width="1"/><rect x="26.6" y="2.6" width="9.8" height="9.8" fill="none" stroke="#111" stroke-width="1.2"/><path d="M51.5 2.5L61 12M61 2.5L51.5 12" stroke="#111" stroke-width="2.4"/></svg>
<span class="t" style="top:36.8px;left:12px;letter-spacing:-0.394px;">Číslo skladu</span>
<span class="t" style="top:36.8px;left:139.7px;letter-spacing:-0.276px;">Název skladu</span>
<span class="t" style="top:36.8px;left:675.5px;letter-spacing:-0.193px;">Celková cena zásob</span>
<div style="left:13px;top:54.1px;width:118px;height:18.4px;background:#dfe9fc;border:1px solid #d3e1fa;"></div>
<span class="t" style="top:56.8px;left:14.6px;letter-spacing:-0.17px;">SMAT</span>
<div style="left:141px;top:54.1px;width:526px;height:18.4px;background:#dfe9fc;border:1px solid #d3e1fa;"></div>
<span class="t" style="top:56.8px;left:142.6px;letter-spacing:-0.245px;">Materiál, náhradní díly</span>
<div style="left:677px;top:54.1px;width:126px;height:18.4px;background:#dfe9fc;border:1px solid #d3e1fa;"></div>
<span class="t" style="top:56.8px;right:156px;font-weight:bold;letter-spacing:-0.11px;">4 304 296,66</span>
<div style="left:13px;top:81.2px;width:790px;height:515.7px;background:#f5f9ff;border:1px solid #cbdbf7;"></div>
<div style="left:14px;top:82.2px;width:788px;height:17.8px;background:linear-gradient(#ffffff,#eef4fe);"></div>
<span class="t" style="top:84.8px;left:17.2px;letter-spacing:-0.29px;">Kód zboží</span>
<div style="left:107.7px;top:82.2px;width:1px;height:17.8px;background:#dbe6f8;"></div>
<span class="t" style="top:84.8px;left:111.4px;letter-spacing:-0.221px;">Název zboží</span>
<div style="left:437.9px;top:82.2px;width:1px;height:17.8px;background:#dbe6f8;"></div>
<span class="t" style="top:84.8px;left:441.6px;letter-spacing:-0.184px;">Skladové množství (sklad.j.)</span>
<div style="left:576.9px;top:82.2px;width:1px;height:17.8px;background:#dbe6f8;"></div>
<span class="t" style="top:84.8px;left:580.6px;letter-spacing:-0.062px;">Skladová MJ</span>
<div style="left:645.8px;top:82.2px;width:1px;height:17.8px;background:#dbe6f8;"></div>
<span class="t" style="top:84.8px;left:649.5px;letter-spacing:-0.253px;">Průměrná skladová cena</span>
<div style="left:768.3px;top:82.2px;width:1px;height:17.8px;background:#dbe6f8;"></div>
<span class="t" style="top:84.8px;left:772px;letter-spacing:0.599px;">I..</span>
<div style="left:784.5px;top:82.2px;width:1px;height:17.8px;background:#dbe6f8;"></div>
<div style="left:14px;top:100px;width:771px;height:18px;background:#004b73;"></div>
<span class="t" style="top:102.8px;left:15.2px;color:#fff;letter-spacing:-0.17px;">PVRSTC</span>
<span class="t" style="top:102.8px;left:109.4px;color:#fff;letter-spacing:-0.218px;">Přední vidlice RST Capa T6</span>
<span class="t" style="top:102.8px;right:382.6px;color:#fff;letter-spacing:-0.086px;">61,00</span>
<span class="t" style="top:102.8px;left:578.6px;color:#fff;">ks</span>
<span class="t" style="top:102.8px;right:191.2px;color:#fff;letter-spacing:-0.204px;">569,26</span>
<div style="left:107.7px;top:100px;width:1px;height:18px;background:#d8e4f0;"></div>
<div style="left:437.9px;top:100px;width:1px;height:18px;background:#d8e4f0;"></div>
<div style="left:576.9px;top:100px;width:1px;height:18px;background:#d8e4f0;"></div>
<div style="left:645.8px;top:100px;width:1px;height:18px;background:#d8e4f0;"></div>
<div style="left:768.3px;top:100px;width:1px;height:18px;background:#d8e4f0;"></div>
<div style="left:14px;top:118px;width:771px;height:18px;background:#cddcfb;"></div>
<span class="t" style="top:120.8px;left:15.2px;letter-spacing:0.04px;">HSRIT1</span>
<span class="t" style="top:120.8px;left:109.4px;letter-spacing:-0.177px;">Hlavové složení Ritchey Zero Logic Integ Comp  1-1/8" (ahead)</span>
<span class="t" style="top:120.8px;right:382.6px;letter-spacing:-0.306px;">14,00</span>
<span class="t" style="top:120.8px;left:578.6px;">ks</span>
<span class="t" style="top:120.8px;right:191.2px;">360,00</span>
<div style="left:107.7px;top:118px;width:1px;height:18px;background:#e9f0fb;"></div>
<div style="left:437.9px;top:118px;width:1px;height:18px;background:#e9f0fb;"></div>
<div style="left:576.9px;top:118px;width:1px;height:18px;background:#e9f0fb;"></div>
<div style="left:645.8px;top:118px;width:1px;height:18px;background:#e9f0fb;"></div>
<div style="left:768.3px;top:118px;width:1px;height:18px;background:#e9f0fb;"></div>
<div style="left:14px;top:136px;width:771px;height:18px;background:#e1ebfd;"></div>
<span class="t" style="top:138.8px;left:15.2px;letter-spacing:-0.327px;">KLFC</span>
<span class="t" style="top:138.8px;left:109.4px;">Klika Shimano FC-MC09 170 mm (levá)</span>
<span class="t" style="top:138.8px;right:382.6px;letter-spacing:-0.083px;">0,00</span>
<span class="t" style="top:138.8px;left:578.6px;">ks</span>
<span class="t" style="top:138.8px;right:191.2px;">73,50</span>
<div style="left:107.7px;top:136px;width:1px;height:18px;background:#e9f0fb;"></div>
<div style="left:437.9px;top:136px;width:1px;height:18px;background:#e9f0fb;"></div>
<div style="left:576.9px;top:136px;width:1px;height:18px;background:#e9f0fb;"></div>
<div style="left:645.8px;top:136px;width:1px;height:18px;background:#e9f0fb;"></div>
<div style="left:768.3px;top:136px;width:1px;height:18px;background:#e9f0fb;"></div>
<div style="left:14px;top:154px;width:771px;height:18px;background:#cddcfb;"></div>
<span class="t" style="top:156.8px;left:15.2px;letter-spacing:-0.09px;">PSFC</span>
<span class="t" style="top:156.8px;left:109.4px;">Převodníky Shimano FC-M442 Deore</span>
<span class="t" style="top:156.8px;right:382.6px;">12,00</span>
<span class="t" style="top:156.8px;left:578.6px;">ks</span>
<span class="t" style="top:156.8px;right:191.2px;">815,00</span>
<div style="left:107.7px;top:154px;width:1px;height:18px;background:#e9f0fb;"></div>
<div style="left:437.9px;top:154px;width:1px;height:18px;background:#e9f0fb;"></div>
<div style="left:576.9px;top:154px;width:1px;height:18px;background:#e9f0fb;"></div>
<div style="left:645.8px;top:154px;width:1px;height:18px;background:#e9f0fb;"></div>
<div style="left:768.3px;top:154px;width:1px;height:18px;background:#e9f0fb;"></div>
<div style="left:14px;top:172px;width:771px;height:18px;background:#e1ebfd;"></div>
<span class="t" style="top:174.8px;left:15.2px;letter-spacing:-0.404px;">SSVPC</span>
<span class="t" style="top:174.8px;left:109.4px;">Středové složení VP-BC73</span>
<span class="t" style="top:174.8px;right:382.6px;">25,00</span>
<span class="t" style="top:174.8px;left:578.6px;">ks</span>
<span class="t" style="top:174.8px;right:191.2px;">186,40</span>
<div style="left:107.7px;top:172px;width:1px;height:18px;background:#e9f0fb;"></div>
<div style="left:437.9px;top:172px;width:1px;height:18px;background:#e9f0fb;"></div>
<div style="left:576.9px;top:172px;width:1px;height:18px;background:#e9f0fb;"></div>
<div style="left:645.8px;top:172px;width:1px;height:18px;background:#e9f0fb;"></div>
<div style="left:768.3px;top:172px;width:1px;height:18px;background:#e9f0fb;"></div>
<div style="left:14px;top:190px;width:771px;height:18px;background:#cddcfb;"></div>
<span class="t" style="top:192.8px;left:15.2px;letter-spacing:-0.121px;">PSACE</span>
<span class="t" style="top:192.8px;left:109.4px;">Přesmykač Shimano Acera FD-M330</span>
<span class="t" style="top:192.8px;right:382.6px;">18,00</span>
<span class="t" style="top:192.8px;left:578.6px;">ks</span>
<span class="t" style="top:192.8px;right:191.2px;">245,00</span>
<div style="left:107.7px;top:190px;width:1px;height:18px;background:#e9f0fb;"></div>
<div style="left:437.9px;top:190px;width:1px;height:18px;background:#e9f0fb;"></div>
<div style="left:576.9px;top:190px;width:1px;height:18px;background:#e9f0fb;"></div>
<div style="left:645.8px;top:190px;width:1px;height:18px;background:#e9f0fb;"></div>
<div style="left:768.3px;top:190px;width:1px;height:18px;background:#e9f0fb;"></div>
<div style="left:14px;top:208px;width:771px;height:18px;background:#e1ebfd;"></div>
<span class="t" style="top:210.8px;left:15.2px;letter-spacing:-0.233px;">MSALIV</span>
<span class="t" style="top:210.8px;left:109.4px;">Měnič Shimano Alivio RD-M410</span>
<span class="t" style="top:210.8px;right:382.6px;">22,00</span>
<span class="t" style="top:210.8px;left:578.6px;">ks</span>
<span class="t" style="top:210.8px;right:191.2px;">412,00</span>
<div style="left:107.7px;top:208px;width:1px;height:18px;background:#e9f0fb;"></div>
<div style="left:437.9px;top:208px;width:1px;height:18px;background:#e9f0fb;"></div>
<div style="left:576.9px;top:208px;width:1px;height:18px;background:#e9f0fb;"></div>
<div style="left:645.8px;top:208px;width:1px;height:18px;background:#e9f0fb;"></div>
<div style="left:768.3px;top:208px;width:1px;height:18px;background:#e9f0fb;"></div>
<div style="left:14px;top:226px;width:771px;height:18px;background:#cddcfb;"></div>
<span class="t" style="top:228.8px;left:15.2px;letter-spacing:-0.035px;">ŘSHALI</span>
<span class="t" style="top:228.8px;left:109.4px;">Řazení Shimano Alivio SL-M410</span>
<span class="t" style="top:228.8px;right:382.6px;">16,00</span>
<span class="t" style="top:228.8px;left:578.6px;">ks</span>
<span class="t" style="top:228.8px;right:191.2px;">398,50</span>
<div style="left:107.7px;top:226px;width:1px;height:18px;background:#e9f0fb;"></div>
<div style="left:437.9px;top:226px;width:1px;height:18px;background:#e9f0fb;"></div>
<div style="left:576.9px;top:226px;width:1px;height:18px;background:#e9f0fb;"></div>
<div style="left:645.8px;top:226px;width:1px;height:18px;background:#e9f0fb;"></div>
<div style="left:768.3px;top:226px;width:1px;height:18px;background:#e9f0fb;"></div>
<div style="left:14px;top:244px;width:771px;height:18px;background:#e1ebfd;"></div>
<span class="t" style="top:246.8px;left:15.2px;letter-spacing:-0.463px;">PSHHG</span>
<span class="t" style="top:246.8px;left:109.4px;">Pastorky Shimano HG-50 9 sp.</span>
<span class="t" style="top:246.8px;right:382.6px;">30,00</span>
<span class="t" style="top:246.8px;left:578.6px;">ks</span>
<span class="t" style="top:246.8px;right:191.2px;">356,00</span>
<div style="left:107.7px;top:244px;width:1px;height:18px;background:#e9f0fb;"></div>
<div style="left:437.9px;top:244px;width:1px;height:18px;background:#e9f0fb;"></div>
<div style="left:576.9px;top:244px;width:1px;height:18px;background:#e9f0fb;"></div>
<div style="left:645.8px;top:244px;width:1px;height:18px;background:#e9f0fb;"></div>
<div style="left:768.3px;top:244px;width:1px;height:18px;background:#e9f0fb;"></div>
<div style="left:14px;top:262px;width:771px;height:18px;background:#cddcfb;"></div>
<span class="t" style="top:264.8px;left:15.2px;letter-spacing:-0.37px;">ŘSHG</span>
<span class="t" style="top:264.8px;left:109.4px;">Řetěz Shimano HG-53</span>
<span class="t" style="top:264.8px;right:382.6px;">45,00</span>
<span class="t" style="top:264.8px;left:578.6px;">ks</span>
<span class="t" style="top:264.8px;right:191.2px;">210,00</span>
<div style="left:107.7px;top:262px;width:1px;height:18px;background:#e9f0fb;"></div>
<div style="left:437.9px;top:262px;width:1px;height:18px;background:#e9f0fb;"></div>
<div style="left:576.9px;top:262px;width:1px;height:18px;background:#e9f0fb;"></div>
<div style="left:645.8px;top:262px;width:1px;height:18px;background:#e9f0fb;"></div>
<div style="left:768.3px;top:262px;width:1px;height:18px;background:#e9f0fb;"></div>
<div style="left:14px;top:280px;width:771px;height:18px;background:#e1ebfd;"></div>
<span class="t" style="top:282.8px;left:15.2px;letter-spacing:-0.154px;">NQUAP</span>
<span class="t" style="top:282.8px;left:109.4px;">Náboj Quando 36 d. přední</span>
<span class="t" style="top:282.8px;right:382.6px;">20,00</span>
<span class="t" style="top:282.8px;left:578.6px;">ks</span>
<span class="t" style="top:282.8px;right:191.2px;">145,00</span>
<div style="left:107.7px;top:280px;width:1px;height:18px;background:#e9f0fb;"></div>
<div style="left:437.9px;top:280px;width:1px;height:18px;background:#e9f0fb;"></div>
<div style="left:576.9px;top:280px;width:1px;height:18px;background:#e9f0fb;"></div>
<div style="left:645.8px;top:280px;width:1px;height:18px;background:#e9f0fb;"></div>
<div style="left:768.3px;top:280px;width:1px;height:18px;background:#e9f0fb;"></div>
<div style="left:14px;top:298px;width:771px;height:18px;background:#cddcfb;"></div>
<span class="t" style="top:300.8px;left:15.2px;letter-spacing:-0.317px;">NQUAZ</span>
<span class="t" style="top:300.8px;left:109.4px;">Náboj Quando 36 d. zadní</span>
<span class="t" style="top:300.8px;right:382.6px;">20,00</span>
<span class="t" style="top:300.8px;left:578.6px;">ks</span>
<span class="t" style="top:300.8px;right:191.2px;">265,00</span>
<div style="left:107.7px;top:298px;width:1px;height:18px;background:#e9f0fb;"></div>
<div style="left:437.9px;top:298px;width:1px;height:18px;background:#e9f0fb;"></div>
<div style="left:576.9px;top:298px;width:1px;height:18px;background:#e9f0fb;"></div>
<div style="left:645.8px;top:298px;width:1px;height:18px;background:#e9f0fb;"></div>
<div style="left:768.3px;top:298px;width:1px;height:18px;background:#e9f0fb;"></div>
<div style="left:14px;top:316px;width:771px;height:18px;background:#e1ebfd;"></div>
<span class="t" style="top:318.8px;left:15.2px;letter-spacing:-0.256px;">BTEKTP</span>
<span class="t" style="top:318.8px;left:109.4px;">Brzda Tektro 29 AL přední</span>
<span class="t" style="top:318.8px;right:382.6px;">34,00</span>
<span class="t" style="top:318.8px;left:578.6px;">ks</span>
<span class="t" style="top:318.8px;right:191.2px;">152,00</span>
<div style="left:107.7px;top:316px;width:1px;height:18px;background:#e9f0fb;"></div>
<div style="left:437.9px;top:316px;width:1px;height:18px;background:#e9f0fb;"></div>
<div style="left:576.9px;top:316px;width:1px;height:18px;background:#e9f0fb;"></div>
<div style="left:645.8px;top:316px;width:1px;height:18px;background:#e9f0fb;"></div>
<div style="left:768.3px;top:316px;width:1px;height:18px;background:#e9f0fb;"></div>
<div style="left:14px;top:334px;width:771px;height:18px;background:#cddcfb;"></div>
<span class="t" style="top:336.8px;left:15.2px;">BTEKTZ</span>
<span class="t" style="top:336.8px;left:109.4px;">Brzda Tektro 29 AL zadní</span>
<span class="t" style="top:336.8px;right:382.6px;">34,00</span>
<span class="t" style="top:336.8px;left:578.6px;">ks</span>
<span class="t" style="top:336.8px;right:191.2px;">152,00</span>
<div style="left:107.7px;top:334px;width:1px;height:18px;background:#e9f0fb;"></div>
<div style="left:437.9px;top:334px;width:1px;height:18px;background:#e9f0fb;"></div>
<div style="left:576.9px;top:334px;width:1px;height:18px;background:#e9f0fb;"></div>
<div style="left:645.8px;top:334px;width:1px;height:18px;background:#e9f0fb;"></div>
<div style="left:768.3px;top:334px;width:1px;height:18px;background:#e9f0fb;"></div>
<div style="left:14px;top:352px;width:771px;height:18px;background:#e1ebfd;"></div>
<span class="t" style="top:354.8px;left:15.2px;">BPSHAL</span>
<span class="t" style="top:354.8px;left:109.4px;">Brzdová páka Shimano Alivio</span>
<span class="t" style="top:354.8px;right:382.6px;">28,00</span>
<span class="t" style="top:354.8px;left:578.6px;">ks</span>
<span class="t" style="top:354.8px;right:191.2px;">189,00</span>
<div style="left:107.7px;top:352px;width:1px;height:18px;background:#e9f0fb;"></div>
<div style="left:437.9px;top:352px;width:1px;height:18px;background:#e9f0fb;"></div>
<div style="left:576.9px;top:352px;width:1px;height:18px;background:#e9f0fb;"></div>
<div style="left:645.8px;top:352px;width:1px;height:18px;background:#e9f0fb;"></div>
<div style="left:768.3px;top:352px;width:1px;height:18px;background:#e9f0fb;"></div>
<div style="left:14px;top:370px;width:771px;height:18px;background:#cddcfb;"></div>
<span class="t" style="top:372.8px;left:15.2px;">RALEX</span>
<span class="t" style="top:372.8px;left:109.4px;">Ráfky Alex DM-18 d. 36</span>
<span class="t" style="top:372.8px;right:382.6px;">40,00</span>
<span class="t" style="top:372.8px;left:578.6px;">ks</span>
<span class="t" style="top:372.8px;right:191.2px;">175,00</span>
<div style="left:107.7px;top:370px;width:1px;height:18px;background:#e9f0fb;"></div>
<div style="left:437.9px;top:370px;width:1px;height:18px;background:#e9f0fb;"></div>
<div style="left:576.9px;top:370px;width:1px;height:18px;background:#e9f0fb;"></div>
<div style="left:645.8px;top:370px;width:1px;height:18px;background:#e9f0fb;"></div>
<div style="left:768.3px;top:370px;width:1px;height:18px;background:#e9f0fb;"></div>
<div style="left:14px;top:388px;width:771px;height:18px;background:#e1ebfd;"></div>
<span class="t" style="top:390.8px;left:15.2px;">POCEL</span>
<span class="t" style="top:390.8px;left:109.4px;">Paprsky ocel</span>
<span class="t" style="top:390.8px;right:382.6px;">2 880,00</span>
<span class="t" style="top:390.8px;left:578.6px;">ks</span>
<span class="t" style="top:390.8px;right:191.2px;">2,10</span>
<div style="left:107.7px;top:388px;width:1px;height:18px;background:#e9f0fb;"></div>
<div style="left:437.9px;top:388px;width:1px;height:18px;background:#e9f0fb;"></div>
<div style="left:576.9px;top:388px;width:1px;height:18px;background:#e9f0fb;"></div>
<div style="left:645.8px;top:388px;width:1px;height:18px;background:#e9f0fb;"></div>
<div style="left:768.3px;top:388px;width:1px;height:18px;background:#e9f0fb;"></div>
<div style="left:14px;top:406px;width:771px;height:18px;background:#cddcfb;"></div>
<span class="t" style="top:408.8px;left:15.2px;">PLRITCHO</span>
<span class="t" style="top:408.8px;left:109.4px;">Plášť Ritchey Speedmax</span>
<span class="t" style="top:408.8px;right:382.6px;">36,00</span>
<span class="t" style="top:408.8px;left:578.6px;">ks</span>
<span class="t" style="top:408.8px;right:191.2px;">298,00</span>
<div style="left:107.7px;top:406px;width:1px;height:18px;background:#e9f0fb;"></div>
<div style="left:437.9px;top:406px;width:1px;height:18px;background:#e9f0fb;"></div>
<div style="left:576.9px;top:406px;width:1px;height:18px;background:#e9f0fb;"></div>
<div style="left:645.8px;top:406px;width:1px;height:18px;background:#e9f0fb;"></div>
<div style="left:768.3px;top:406px;width:1px;height:18px;background:#e9f0fb;"></div>
<div style="left:14px;top:424px;width:771px;height:18px;background:#e1ebfd;"></div>
<span class="t" style="top:426.8px;left:15.2px;">PEAUTL</span>
<span class="t" style="top:426.8px;left:109.4px;">Pedál Author dural/ocel levý</span>
<span class="t" style="top:426.8px;right:382.6px;">25,00</span>
<span class="t" style="top:426.8px;left:578.6px;">ks</span>
<span class="t" style="top:426.8px;right:191.2px;">95,00</span>
<div style="left:107.7px;top:424px;width:1px;height:18px;background:#e9f0fb;"></div>
<div style="left:437.9px;top:424px;width:1px;height:18px;background:#e9f0fb;"></div>
<div style="left:576.9px;top:424px;width:1px;height:18px;background:#e9f0fb;"></div>
<div style="left:645.8px;top:424px;width:1px;height:18px;background:#e9f0fb;"></div>
<div style="left:768.3px;top:424px;width:1px;height:18px;background:#e9f0fb;"></div>
<div style="left:14px;top:442px;width:771px;height:18px;background:#cddcfb;"></div>
<span class="t" style="top:444.8px;left:15.2px;">PEAUTP</span>
<span class="t" style="top:444.8px;left:109.4px;">Pedál Author dural/ocel pravý</span>
<span class="t" style="top:444.8px;right:382.6px;">25,00</span>
<span class="t" style="top:444.8px;left:578.6px;">ks</span>
<span class="t" style="top:444.8px;right:191.2px;">95,00</span>
<div style="left:107.7px;top:442px;width:1px;height:18px;background:#e9f0fb;"></div>
<div style="left:437.9px;top:442px;width:1px;height:18px;background:#e9f0fb;"></div>
<div style="left:576.9px;top:442px;width:1px;height:18px;background:#e9f0fb;"></div>
<div style="left:645.8px;top:442px;width:1px;height:18px;background:#e9f0fb;"></div>
<div style="left:768.3px;top:442px;width:1px;height:18px;background:#e9f0fb;"></div>
<div style="left:14px;top:460px;width:771px;height:18px;background:#e1ebfd;"></div>
<span class="t" style="top:462.8px;left:15.2px;">ŘIOCE</span>
<span class="t" style="top:462.8px;left:109.4px;">Řidítka KALIN ocel</span>
<span class="t" style="top:462.8px;right:382.6px;">15,00</span>
<span class="t" style="top:462.8px;left:578.6px;">ks</span>
<span class="t" style="top:462.8px;right:191.2px;">120,00</span>
<div style="left:107.7px;top:460px;width:1px;height:18px;background:#e9f0fb;"></div>
<div style="left:437.9px;top:460px;width:1px;height:18px;background:#e9f0fb;"></div>
<div style="left:576.9px;top:460px;width:1px;height:18px;background:#e9f0fb;"></div>
<div style="left:645.8px;top:460px;width:1px;height:18px;background:#e9f0fb;"></div>
<div style="left:768.3px;top:460px;width:1px;height:18px;background:#e9f0fb;"></div>
<div style="left:14px;top:478px;width:771px;height:18px;background:#cddcfb;"></div>
<span class="t" style="top:480.8px;left:15.2px;">GRAUT</span>
<span class="t" style="top:480.8px;left:109.4px;">Gripy Author dvouvrstvé</span>
<span class="t" style="top:480.8px;right:382.6px;">60,00</span>
<span class="t" style="top:480.8px;left:578.6px;">ks</span>
<span class="t" style="top:480.8px;right:191.2px;">48,00</span>
<div style="left:107.7px;top:478px;width:1px;height:18px;background:#e9f0fb;"></div>
<div style="left:437.9px;top:478px;width:1px;height:18px;background:#e9f0fb;"></div>
<div style="left:576.9px;top:478px;width:1px;height:18px;background:#e9f0fb;"></div>
<div style="left:645.8px;top:478px;width:1px;height:18px;background:#e9f0fb;"></div>
<div style="left:768.3px;top:478px;width:1px;height:18px;background:#e9f0fb;"></div>
<div style="left:14px;top:496px;width:771px;height:18px;background:#e1ebfd;"></div>
<span class="t" style="top:498.8px;left:15.2px;">PZOOM</span>
<span class="t" style="top:498.8px;left:109.4px;">Představec ZOOM dural</span>
<span class="t" style="top:498.8px;right:382.6px;">19,00</span>
<span class="t" style="top:498.8px;left:578.6px;">ks</span>
<span class="t" style="top:498.8px;right:191.2px;">215,00</span>
<div style="left:107.7px;top:496px;width:1px;height:18px;background:#e9f0fb;"></div>
<div style="left:437.9px;top:496px;width:1px;height:18px;background:#e9f0fb;"></div>
<div style="left:576.9px;top:496px;width:1px;height:18px;background:#e9f0fb;"></div>
<div style="left:645.8px;top:496px;width:1px;height:18px;background:#e9f0fb;"></div>
<div style="left:768.3px;top:496px;width:1px;height:18px;background:#e9f0fb;"></div>
<div style="left:14px;top:514px;width:771px;height:18px;background:#cddcfb;"></div>
<span class="t" style="top:516.8px;left:15.2px;">SZOOMD</span>
<span class="t" style="top:516.8px;left:109.4px;">Sedlovka ZOOM dural</span>
<span class="t" style="top:516.8px;right:382.6px;">21,00</span>
<span class="t" style="top:516.8px;left:578.6px;">ks</span>
<span class="t" style="top:516.8px;right:191.2px;">168,00</span>
<div style="left:107.7px;top:514px;width:1px;height:18px;background:#e9f0fb;"></div>
<div style="left:437.9px;top:514px;width:1px;height:18px;background:#e9f0fb;"></div>
<div style="left:576.9px;top:514px;width:1px;height:18px;background:#e9f0fb;"></div>
<div style="left:645.8px;top:514px;width:1px;height:18px;background:#e9f0fb;"></div>
<div style="left:768.3px;top:514px;width:1px;height:18px;background:#e9f0fb;"></div>
<div style="left:14px;top:532px;width:771px;height:18px;background:#e1ebfd;"></div>
<span class="t" style="top:534.8px;left:15.2px;">OBAUT</span>
<span class="t" style="top:534.8px;left:109.4px;">Objímka Author (31,8)</span>
<span class="t" style="top:534.8px;right:382.6px;">33,00</span>
<span class="t" style="top:534.8px;left:578.6px;">ks</span>
<span class="t" style="top:534.8px;right:191.2px;">42,00</span>
<div style="left:107.7px;top:532px;width:1px;height:18px;background:#e9f0fb;"></div>
<div style="left:437.9px;top:532px;width:1px;height:18px;background:#e9f0fb;"></div>
<div style="left:576.9px;top:532px;width:1px;height:18px;background:#e9f0fb;"></div>
<div style="left:645.8px;top:532px;width:1px;height:18px;background:#e9f0fb;"></div>
<div style="left:768.3px;top:532px;width:1px;height:18px;background:#e9f0fb;"></div>
<div style="left:14px;top:550px;width:771px;height:18px;background:#cddcfb;"></div>
<span class="t" style="top:552.8px;left:15.2px;">POAUT</span>
<span class="t" style="top:552.8px;left:109.4px;">Podsedlový šroub Author</span>
<span class="t" style="top:552.8px;right:382.6px;">50,00</span>
<span class="t" style="top:552.8px;left:578.6px;">ks</span>
<span class="t" style="top:552.8px;right:191.2px;">18,00</span>
<div style="left:107.7px;top:550px;width:1px;height:18px;background:#e9f0fb;"></div>
<div style="left:437.9px;top:550px;width:1px;height:18px;background:#e9f0fb;"></div>
<div style="left:576.9px;top:550px;width:1px;height:18px;background:#e9f0fb;"></div>
<div style="left:645.8px;top:550px;width:1px;height:18px;background:#e9f0fb;"></div>
<div style="left:768.3px;top:550px;width:1px;height:18px;background:#e9f0fb;"></div>
<div style="left:785px;top:82.2px;width:17px;height:496.7px;background:#f1f5fa;"></div>
<div style="left:785px;top:82.2px;width:17px;height:17.8px;background:#fcfdff;"></div>
<div style="left:785px;top:100px;width:17px;height:23.8px;background:#dbe7f5;"></div>
<svg style="left:789.5px;top:87.7px;" width="8" height="7" viewBox="0 0 8 7"><path d="M0.8 5.6L4 2L7.2 5.6" fill="none" stroke="#0a1420" stroke-width="2"/></svg>
<div style="left:14px;top:578.9px;width:788px;height:17px;background:#f1f5fa;"></div>
<div style="left:14px;top:578.9px;width:17px;height:17px;background:#fcfdff;"></div>
<svg style="left:19px;top:583.4px;" width="7" height="8" viewBox="0 0 7 8"><path d="M5.6 0.8L2 4L5.6 7.2" fill="none" stroke="#0a1420" stroke-width="2"/></svg>
<div style="left:31px;top:578.9px;width:17px;height:17px;background:#dbe7f5;"></div>
<div style="left:816px;top:79.8px;width:128px;height:22px;background:#4e88b8;"></div>
<span class="t" style="top:84.8px;left:680px;width:400px;text-align:center;color:#fff;letter-spacing:-0.131px;">Podrobná skl. karta</span>
<div style="left:816px;top:107.8px;width:128px;height:22px;background:#4e88b8;"></div>
<span class="t" style="top:112.8px;left:680px;width:400px;text-align:center;color:#fff;letter-spacing:-0.203px;">Skladová karta</span>
<div style="left:816px;top:135.8px;width:128px;height:22px;background:#4e88b8;"></div>
<span class="t" style="top:140.8px;left:680px;width:400px;text-align:center;color:#7fa8cf;">Rozpad stavu zásob</span>
<div style="left:13px;top:609.6px;width:12.6px;height:12.4px;background:#fff;border:1px solid #8a8a8a;"></div>
<span class="t" style="top:609.8px;left:29.3px;letter-spacing:-0.074px;">Pouze nevyřazené</span>
</div>
<div style="left:264.5px;top:325px;width:974.7px;height:607.2px;overflow:hidden;background:#fff;">
<div style="left:0px;top:0px;width:974.7px;height:27.7px;background:#1c4768;"></div>
<div style="left:0px;top:0px;width:1.2px;height:607.2px;background:#2c69a0;"></div>
<div style="left:0px;top:0px;width:974.7px;height:1px;background:#3a7aae;"></div>
<div style="left:973.7px;top:0px;width:1px;height:27.7px;background:#3a7aae;"></div>
<svg style="left:6.5px;top:6px;" width="15" height="17" viewBox="0 0 15 17"><path d="M0.5 0.5L14.5 8.5L0.5 16.5Z" fill="#fff"/></svg>
<span class="t" style="top:8px;left:26px;color:#fff;font-weight:bold;letter-spacing:0.048px;">Stav zásob, rezervací a blokací vybraného zboží</span>
<span class="t" style="top:8px;right:84.5px;color:#fff;font-weight:bold;">1</span>
<svg style="left:901.7px;top:8px;" width="64" height="14" viewBox="0 0 64 14"><path d="M1 6.5H11" stroke="#fff" stroke-width="1"/><rect x="26.6" y="2.6" width="9.8" height="9.8" fill="none" stroke="#fff" stroke-width="1.2"/><path d="M51.5 2.5L61 12M61 2.5L51.5 12" stroke="#fff" stroke-width="1.3"/></svg>
<span class="t" style="top:37px;left:11.2px;letter-spacing:-0.29px;">Kód zboží</span>
<span class="t" style="top:37px;left:143.1px;letter-spacing:-0.221px;">Název zboží</span>
<div style="left:12.5px;top:54px;width:122.3px;height:19px;background:#dfe9fc;border:1px solid #e3192b;"></div>
<div style="left:14.1px;top:56.2px;width:39px;height:12.8px;background:#5a8dbb;"></div>
<span class="t" style="top:57px;left:14.8px;color:#fff;letter-spacing:-0.17px;">PVRSTC</span>
<div style="left:53.1px;top:56.2px;width:1px;height:12.8px;background:#6b5a30;"></div>
<div style="left:144.5px;top:54.3px;width:546px;height:18.6px;background:#dfe9fc;border:1px solid #d3e1fa;"></div>
<span class="t" style="top:57px;left:146.1px;letter-spacing:-0.218px;">Přední vidlice RST Capa T6</span>
<div style="left:699.5px;top:52.3px;width:128px;height:21.7px;background:#4e88b8;"></div>
<span class="t" style="top:58px;left:563.5px;width:400px;text-align:center;color:#fff;letter-spacing:-0.107px;">Průběh stavu zásob</span>
<div style="left:835.5px;top:52.3px;width:128px;height:21.7px;background:#4e88b8;"></div>
<span class="t" style="top:58px;left:699.5px;width:400px;text-align:center;color:#fff;letter-spacing:-0.131px;">Podrobná skl. karta</span>
<div style="left:12.7px;top:80.8px;width:950px;height:106.3px;background:#f5f9ff;border:1px solid #cbdbf7;"></div>
<div style="left:13.7px;top:81.8px;width:948px;height:18.2px;background:linear-gradient(#ffffff,#eef4fe);"></div>
<span class="t" style="top:85px;left:16.9px;letter-spacing:-0.394px;">Číslo skladu</span>
<div style="left:72.2px;top:81.8px;width:1px;height:18.2px;background:#dbe6f8;"></div>
<span class="t" style="top:85px;left:75.9px;letter-spacing:-0.276px;">Název skladu</span>
<div style="left:278px;top:81.8px;width:1px;height:18.2px;background:#dbe6f8;"></div>
<span class="t" style="top:85px;left:281.7px;letter-spacing:-0.184px;">Skladové množství (sklad.j.)</span>
<div style="left:417.3px;top:81.8px;width:1px;height:18.2px;background:#dbe6f8;"></div>
<span class="t" style="top:85px;left:421px;letter-spacing:-0.293px;">Blokováno ze skladu</span>
<div style="left:518.4px;top:81.8px;width:1px;height:18.2px;background:#dbe6f8;"></div>
<span class="t" style="top:85px;left:522.1px;letter-spacing:-0.259px;">Blokováno na podřízených skladech</span>
<div style="left:692.4px;top:81.8px;width:1px;height:18.2px;background:#dbe6f8;"></div>
<span class="t" style="top:85px;left:696.1px;letter-spacing:-0.182px;">Rezervováno ze skladu</span>
<div style="left:808.3px;top:81.8px;width:1px;height:18.2px;background:#dbe6f8;"></div>
<span class="t" style="top:85px;left:812px;letter-spacing:-0.026px;">Rezervováno na podříze...</span>
<div style="left:944.6px;top:81.8px;width:1px;height:18.2px;background:#dbe6f8;"></div>
<div style="left:13.7px;top:100px;width:931.4px;height:18px;background:#004b73;"></div>
<span class="t" style="top:103px;left:14.9px;color:#fff;letter-spacing:-0.17px;">SMAT</span>
<span class="t" style="top:103px;left:73.9px;color:#fff;letter-spacing:-0.245px;">Materiál, náhradní díly</span>
<span class="t" style="top:103px;right:560.9px;color:#fff;letter-spacing:-0.086px;">61,00</span>
<span class="t" style="top:103px;right:459.8px;color:#fff;letter-spacing:-0.086px;">61,00</span>
<span class="t" style="top:103px;right:169.9px;color:#fff;">51,00</span>
<div style="left:72.2px;top:100px;width:1px;height:18px;background:#d8e4f0;"></div>
<div style="left:278px;top:100px;width:1px;height:18px;background:#d8e4f0;"></div>
<div style="left:417.3px;top:100px;width:1px;height:18px;background:#d8e4f0;"></div>
<div style="left:518.4px;top:100px;width:1px;height:18px;background:#d8e4f0;"></div>
<div style="left:692.4px;top:100px;width:1px;height:18px;background:#d8e4f0;"></div>
<div style="left:808.3px;top:100px;width:1px;height:18px;background:#d8e4f0;"></div>
<div style="left:13.7px;top:118px;width:931.4px;height:18px;background:#cddcfb;"></div>
<span class="t" style="top:121px;left:14.9px;letter-spacing:-0.449px;">SHV1</span>
<span class="t" style="top:121px;left:73.9px;letter-spacing:-0.11px;">Hotové výrobky - kola, rámy</span>
<span class="t" style="top:121px;right:560.9px;letter-spacing:-0.358px;">5,00</span>
<span class="t" style="top:121px;right:459.8px;letter-spacing:-0.083px;">0,00</span>
<span class="t" style="top:121px;right:169.9px;letter-spacing:-0.083px;">0,00</span>
<div style="left:72.2px;top:118px;width:1px;height:18px;background:#e9f0fb;"></div>
<div style="left:278px;top:118px;width:1px;height:18px;background:#e9f0fb;"></div>
<div style="left:417.3px;top:118px;width:1px;height:18px;background:#e9f0fb;"></div>
<div style="left:518.4px;top:118px;width:1px;height:18px;background:#e9f0fb;"></div>
<div style="left:692.4px;top:118px;width:1px;height:18px;background:#e9f0fb;"></div>
<div style="left:808.3px;top:118px;width:1px;height:18px;background:#e9f0fb;"></div>
<div style="left:13.7px;top:136px;width:931.4px;height:18px;background:#e1ebfd;"></div>
<span class="t" style="top:139px;left:14.9px;letter-spacing:-0.234px;">KANP</span>
<span class="t" style="top:139px;left:73.9px;letter-spacing:-0.176px;">Kancelářské potřeby</span>
<span class="t" style="top:139px;right:560.9px;">1,00</span>
<span class="t" style="top:139px;right:459.8px;letter-spacing:-0.083px;">0,00</span>
<span class="t" style="top:139px;right:169.9px;letter-spacing:-0.083px;">0,00</span>
<div style="left:72.2px;top:136px;width:1px;height:18px;background:#e9f0fb;"></div>
<div style="left:278px;top:136px;width:1px;height:18px;background:#e9f0fb;"></div>
<div style="left:417.3px;top:136px;width:1px;height:18px;background:#e9f0fb;"></div>
<div style="left:518.4px;top:136px;width:1px;height:18px;background:#e9f0fb;"></div>
<div style="left:692.4px;top:136px;width:1px;height:18px;background:#e9f0fb;"></div>
<div style="left:808.3px;top:136px;width:1px;height:18px;background:#e9f0fb;"></div>
<div style="left:945.1px;top:81.8px;width:16.6px;height:87.3px;background:#f1f5fa;"></div>
<div style="left:945.1px;top:81.8px;width:16.6px;height:18.2px;background:#fcfdff;"></div>
<div style="left:945.1px;top:100px;width:16.6px;height:30.4px;background:#dbe7f5;"></div>
<svg style="left:949.4px;top:87.3px;" width="8" height="7" viewBox="0 0 8 7"><path d="M0.8 5.6L4 2L7.2 5.6" fill="none" stroke="#0a1420" stroke-width="2"/></svg>
<div style="left:13.7px;top:169.1px;width:948px;height:17px;background:#f1f5fa;"></div>
<div style="left:13.7px;top:169.1px;width:17px;height:17px;background:#fcfdff;"></div>
<svg style="left:18.7px;top:173.6px;" width="7" height="8" viewBox="0 0 7 8"><path d="M5.6 0.8L2 4L5.6 7.2" fill="none" stroke="#0a1420" stroke-width="2"/></svg>
<div style="left:30.5px;top:169.1px;width:17px;height:17px;background:#dbe7f5;"></div>
<svg style="left:949.5px;top:157.5px;" width="8" height="7" viewBox="0 0 8 7"><path d="M0.8 1.4L4 5L7.2 1.4" fill="none" stroke="#0a1420" stroke-width="2"/></svg>
<svg style="left:933px;top:173.5px;" width="7" height="8" viewBox="0 0 7 8"><path d="M1.4 0.8L5 4L1.4 7.2" fill="none" stroke="#0a1420" stroke-width="2"/></svg>
<span class="t" style="top:196px;left:223px;letter-spacing:-0.18px;">Stav zásob za všechny sklady</span>
<div style="left:224.5px;top:213px;width:582px;height:18.6px;background:#dfe9fc;border:1px solid #d3e1fa;"></div>
<span class="t" style="top:216px;right:171.2px;">67,00</span>
<div style="left:823.5px;top:212.2px;width:128px;height:21.8px;background:#4e88b8;"></div>
<span class="t" style="top:218px;left:687.5px;width:400px;text-align:center;color:#fff;letter-spacing:-0.085px;">Přepočet rez.a blok.</span>
<div style="left:12.3px;top:242.3px;width:951px;height:353.3px;background:#fafcff;border:1px solid #cbdbf7;"></div>
<div style="left:12.3px;top:222px;width:114px;height:21.5px;background:#fafcff;border:1px solid #cbdbf7;border-bottom:none;"></div>
<span class="t" style="top:226px;left:18.9px;letter-spacing:-0.155px;">Rezervace a blokace</span>
<span class="t" style="top:227px;left:129.9px;letter-spacing:-0.364px;">Na příjmu</span>
<span class="t" style="top:263px;left:23px;letter-spacing:-0.165px;">Rezervováno objednávkami</span>
<span class="t" style="top:263px;left:161.5px;font-weight:bold;letter-spacing:3.35px;">........</span>
<div style="left:224.5px;top:255.3px;width:582px;height:18.5px;background:#dfe9fc;border:1px solid #d3e1fa;"></div>
<span class="t" style="top:258px;right:171.2px;">51,00</span>
<div style="left:823.5px;top:254px;width:128px;height:21.8px;background:#4e88b8;"></div>
<span class="t" style="top:259px;left:687.5px;width:400px;text-align:center;color:#fff;letter-spacing:-0.059px;">Rezerv.objednávkami</span>
<span class="t" style="top:291px;left:23px;letter-spacing:-0.288px;">Blokováno objednávkami</span>
<span class="t" style="top:291px;left:146.4px;font-weight:bold;letter-spacing:3.35px;">..........</span>
<div style="left:224.5px;top:283.3px;width:582px;height:18.5px;background:#dfe9fc;border:1px solid #d3e1fa;"></div>
<span class="t" style="top:286px;right:171.2px;">60,00</span>
<div style="left:823.5px;top:282px;width:128px;height:21.8px;background:#4e88b8;"></div>
<span class="t" style="top:287px;left:687.5px;width:400px;text-align:center;color:#fff;letter-spacing:-0.311px;">Blokace objednávkami</span>
<span class="t" style="top:319px;left:23px;letter-spacing:-0.361px;">Blokováno dodacími listy</span>
<span class="t" style="top:319px;left:143.2px;font-weight:bold;letter-spacing:3.35px;">..........</span>
<div style="left:224.5px;top:311.3px;width:582px;height:18.5px;background:#dfe9fc;border:1px solid #d3e1fa;"></div>
<span class="t" style="top:314px;right:171.2px;letter-spacing:-0.083px;">0,00</span>
<div style="left:823.5px;top:310px;width:128px;height:21.8px;background:#4e88b8;"></div>
<span class="t" style="top:315px;left:687.5px;width:400px;text-align:center;color:#fff;letter-spacing:-0.222px;">Dodací listy vydané</span>
<span class="t" style="top:347px;left:23px;letter-spacing:-0.264px;">Blokováno skl. výdejkami</span>
<span class="t" style="top:347px;left:147.5px;font-weight:bold;letter-spacing:3.35px;">..........</span>
<div style="left:224.5px;top:339.3px;width:582px;height:18.5px;background:#dfe9fc;border:1px solid #d3e1fa;"></div>
<span class="t" style="top:342px;right:171.2px;letter-spacing:-0.083px;">0,00</span>
<div style="left:823.5px;top:338px;width:128px;height:21.8px;background:#4e88b8;"></div>
<span class="t" style="top:343px;left:687.5px;width:400px;text-align:center;color:#fff;letter-spacing:-0.065px;">Rozpracované výdejky</span>
<span class="t" style="top:375px;left:23px;letter-spacing:-0.346px;">Blokováno pokladním prodejem</span>
<span class="t" style="top:375px;left:175.4px;font-weight:bold;letter-spacing:3.35px;">......</span>
<div style="left:224.5px;top:367.3px;width:582px;height:18.5px;background:#dfe9fc;border:1px solid #d3e1fa;"></div>
<span class="t" style="top:370px;right:171.2px;letter-spacing:-0.083px;">0,00</span>
<span class="t" style="top:403px;left:23px;letter-spacing:-0.197px;">Rezervováno zápůjčkami</span>
<span class="t" style="top:403px;left:147.5px;font-weight:bold;letter-spacing:3.35px;">..........</span>
<div style="left:224.5px;top:395.3px;width:582px;height:18.5px;background:#dfe9fc;border:1px solid #d3e1fa;"></div>
<span class="t" style="top:398px;right:171.2px;letter-spacing:-0.083px;">0,00</span>
<div style="left:823.5px;top:394px;width:128px;height:21.8px;background:#4e88b8;"></div>
<span class="t" style="top:399px;left:687.5px;width:400px;text-align:center;color:#fff;letter-spacing:-0.221px;">Rezervace zápůjčkami</span>
<span class="t" style="top:431px;left:23px;letter-spacing:-0.334px;">Blokováno zápůjčkami</span>
<span class="t" style="top:431px;left:132.4px;font-weight:bold;letter-spacing:3.35px;">............</span>
<div style="left:224.5px;top:423.3px;width:582px;height:18.5px;background:#dfe9fc;border:1px solid #d3e1fa;"></div>
<span class="t" style="top:426px;right:171.2px;letter-spacing:-0.083px;">0,00</span>
<div style="left:823.5px;top:422px;width:128px;height:21.8px;background:#4e88b8;"></div>
<span class="t" style="top:427px;left:687.5px;width:400px;text-align:center;color:#fff;letter-spacing:-0.376px;">Blokace zápůjčkami</span>
<span class="t" style="top:459px;left:23px;letter-spacing:-0.283px;">Rezervováno reklamacemi</span>
<span class="t" style="top:459px;left:153.4px;font-weight:bold;letter-spacing:3.35px;">.........</span>
<div style="left:224.5px;top:451.3px;width:582px;height:18.5px;background:#dfe9fc;border:1px solid #d3e1fa;"></div>
<span class="t" style="top:454px;right:171.2px;letter-spacing:-0.083px;">0,00</span>
<div style="left:823.5px;top:450px;width:128px;height:21.8px;background:#4e88b8;"></div>
<span class="t" style="top:455px;left:687.5px;width:400px;text-align:center;color:#fff;letter-spacing:-0.232px;">Rezerv. reklamacemi</span>
<span class="t" style="top:487px;left:23px;letter-spacing:-0.422px;">Blokováno reklamacemi</span>
<span class="t" style="top:487px;left:138.3px;font-weight:bold;letter-spacing:3.35px;">...........</span>
<div style="left:224.5px;top:479.3px;width:582px;height:18.5px;background:#dfe9fc;border:1px solid #d3e1fa;"></div>
<span class="t" style="top:482px;right:171.2px;letter-spacing:-0.083px;">0,00</span>
<div style="left:823.5px;top:478px;width:128px;height:21.8px;background:#4e88b8;"></div>
<span class="t" style="top:483px;left:687.5px;width:400px;text-align:center;color:#fff;letter-spacing:-0.462px;">Blokace reklamacemi</span>
<span class="t" style="top:515px;left:23px;letter-spacing:-0.228px;">Rezervováno žádankami na materiál</span>
<span class="t" style="top:515px;left:202.1px;font-weight:bold;letter-spacing:3.35px;">..</span>
<div style="left:224.5px;top:507.3px;width:582px;height:18.5px;background:#dfe9fc;border:1px solid #d3e1fa;"></div>
<span class="t" style="top:510px;right:171.2px;letter-spacing:-0.083px;">0,00</span>
<div style="left:823.5px;top:506px;width:128px;height:21.8px;background:#4e88b8;"></div>
<span class="t" style="top:511px;left:687.5px;width:400px;text-align:center;color:#fff;letter-spacing:-0.226px;">Rezervace žádankami</span>
<span class="t" style="top:543px;left:23px;letter-spacing:-0.325px;">Blokováno žádankami na materiál</span>
<span class="t" style="top:543px;left:186.8px;font-weight:bold;letter-spacing:3.35px;">....</span>
<div style="left:224.5px;top:535.3px;width:582px;height:18.5px;background:#dfe9fc;border:1px solid #d3e1fa;"></div>
<span class="t" style="top:538px;right:171.2px;">1,00</span>
<div style="left:823.5px;top:534px;width:128px;height:21.8px;background:#4e88b8;"></div>
<span class="t" style="top:539px;left:687.5px;width:400px;text-align:center;color:#fff;letter-spacing:-0.391px;">Blokace žádankami</span>
<div style="left:823.5px;top:564px;width:128px;height:21.8px;background:#4e88b8;"></div>
<span class="t" style="top:569px;left:687.5px;width:400px;text-align:center;color:#fff;letter-spacing:-0.155px;">Rezervace a blokace</span>
</div>
</div>
<div style="left:1678px;top:72px;width:2px;height:938px;background:#f4f8fd;"></div>
</div>
</body></html>
